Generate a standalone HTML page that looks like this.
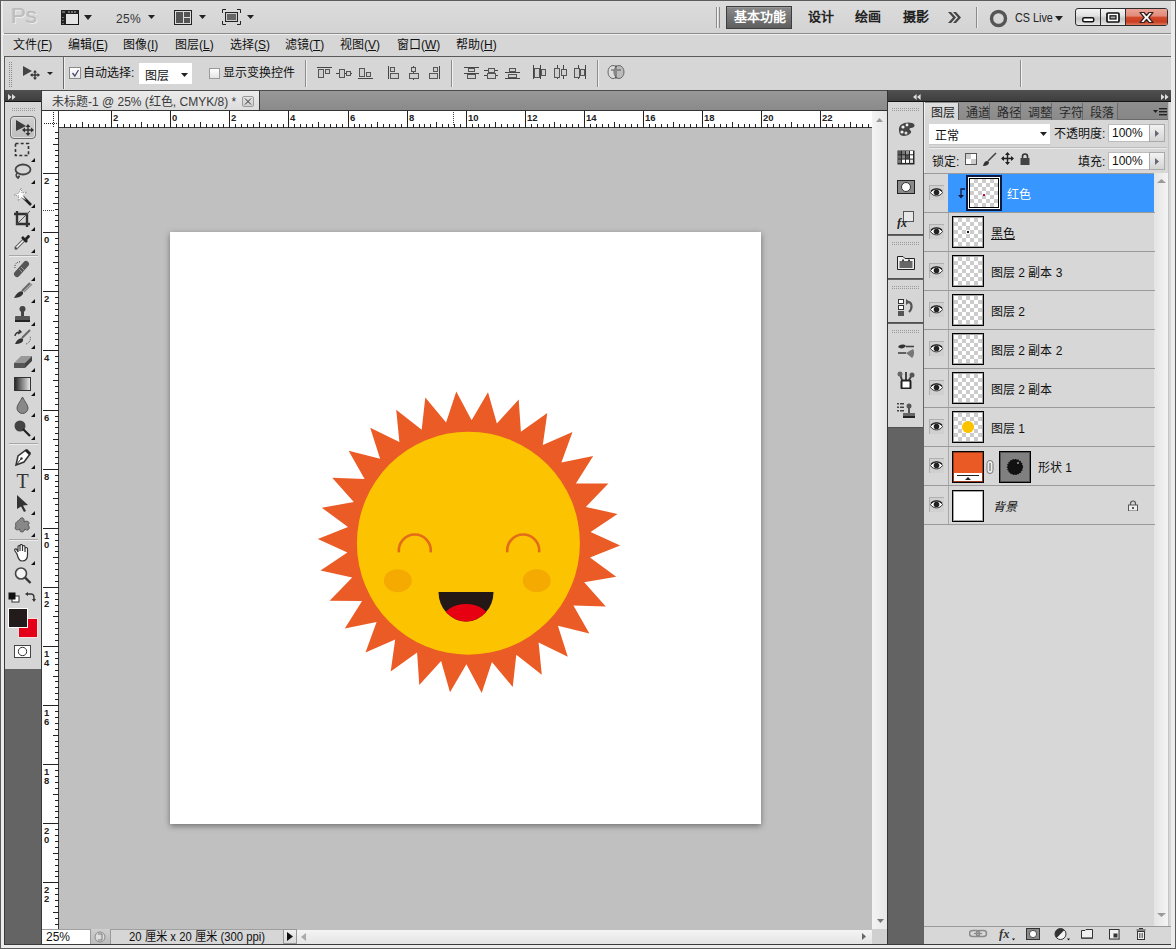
<!DOCTYPE html>
<html lang="zh-CN"><head><meta charset="utf-8"><style>
*{margin:0;padding:0;box-sizing:border-box}
html,body{width:1176px;height:949px;overflow:hidden;background:#d6d6d6;font-family:"Liberation Sans",sans-serif;font-size:12px;color:#000}
div{position:absolute}
.t{white-space:nowrap;line-height:14px}
</style></head>
<body>
<div style="left:0px;top:0px;width:1176px;height:949px;background:#ececec;border:1px solid #5c5c5c"></div>
<div style="left:3px;top:1px;width:1168px;height:32px;background:linear-gradient(#dcdcdc,#d3d3d3)"></div>
<div style="left:4px;top:33px;width:1167px;height:1px;background:#8c8c8c"></div>
<div style="left:3px;top:34px;width:1168px;height:22px;background:#d6d6d6;border-top:1px solid #f0f0f0"></div>
<div style="left:4px;top:56px;width:1167px;height:1px;background:#5a5a5a"></div>
<div style="left:4px;top:57px;width:1167px;height:33px;background:#d6d6d6;border-left:1px solid #5a5a5a"></div>
<div style="left:42px;top:90px;width:845px;height:20px;background:linear-gradient(#999,#8a8a8a)"></div>
<div style="left:42px;top:110px;width:830px;height:18px;background:#fff;border-top:1px solid #3a3a3a;border-bottom:1px solid #3a3a3a"></div>
<div style="left:42px;top:111px;width:17px;height:818px;background:#fff;border-right:1px solid #3a3a3a"></div>
<div style="left:59px;top:128px;width:813px;height:801px;background:#c0c0c0"></div>
<div style="left:170px;top:232px;width:591px;height:592px;background:#fff;box-shadow:0 2px 6px rgba(0,0,0,.42)"></div>
<div style="left:872px;top:110px;width:15px;height:819px;background:linear-gradient(90deg,#f4f4f4,#e6e6e6)"></div>
<div style="left:42px;top:929px;width:830px;height:15px;background:#d6d6d6;border-top:1px solid #a0a0a0"></div>
<div style="left:887px;top:90px;width:1px;height:855px;background:#333"></div>
<div style="left:4px;top:90px;width:38px;height:855px;background:#646464;border-left:1px solid #3a3a3a;border-right:1px solid #3a3a3a"></div>
<div style="left:5px;top:90px;width:36px;height:12px;background:linear-gradient(#505050,#3e3e3e);border-bottom:1px solid #141414"></div>
<div style="left:5px;top:102px;width:36px;height:567px;background:#d6d6d6"></div>
<div style="left:888px;top:90px;width:36px;height:855px;background:#636363"></div>
<div style="left:888px;top:90px;width:283px;height:12px;background:linear-gradient(#505050,#3e3e3e);border-bottom:1px solid #141414"></div>
<div style="left:42px;top:110px;width:845px;height:1px;background:#333"></div>
<div style="left:888px;top:102px;width:35px;height:133px;background:#d6d6d6;border-bottom:1px solid #505050"></div>
<div style="left:888px;top:236px;width:35px;height:43px;background:#d6d6d6;border-bottom:1px solid #505050"></div>
<div style="left:888px;top:280px;width:35px;height:43px;background:#d6d6d6;border-bottom:1px solid #505050"></div>
<div style="left:888px;top:324px;width:35px;height:104px;background:#d6d6d6;border-bottom:1px solid #505050"></div>
<div style="left:924px;top:102px;width:247px;height:843px;background:#d7d7d7;border-left:1px solid #f0f0f0"></div>
<div style="left:925px;top:102px;width:246px;height:18px;background:#8a8a8a"></div>
<svg style="position:absolute;left:59px;top:111px;" width="813" height="17" viewBox="0 0 813 17"><rect x="5" y="13" width="1" height="4" fill="#222"/><rect x="11" y="13" width="1" height="4" fill="#222"/><rect x="17" y="13" width="1" height="4" fill="#222"/><rect x="23" y="11" width="1" height="6" fill="#222"/><rect x="29" y="13" width="1" height="4" fill="#222"/><rect x="34" y="13" width="1" height="4" fill="#222"/><rect x="40" y="13" width="1" height="4" fill="#222"/><rect x="46" y="13" width="1" height="4" fill="#222"/><rect x="52" y="0" width="1" height="17" fill="#222"/><text x="54" y="10" font-size="9.5" font-weight="bold" fill="#222" font-family="Liberation Sans">2</text><rect x="58" y="13" width="1" height="4" fill="#222"/><rect x="64" y="13" width="1" height="4" fill="#222"/><rect x="70" y="13" width="1" height="4" fill="#222"/><rect x="76" y="13" width="1" height="4" fill="#222"/><rect x="82" y="11" width="1" height="6" fill="#222"/><rect x="88" y="13" width="1" height="4" fill="#222"/><rect x="94" y="13" width="1" height="4" fill="#222"/><rect x="99" y="13" width="1" height="4" fill="#222"/><rect x="105" y="13" width="1" height="4" fill="#222"/><rect x="111" y="0" width="1" height="17" fill="#222"/><text x="113" y="10" font-size="9.5" font-weight="bold" fill="#222" font-family="Liberation Sans">0</text><rect x="117" y="13" width="1" height="4" fill="#222"/><rect x="123" y="13" width="1" height="4" fill="#222"/><rect x="129" y="13" width="1" height="4" fill="#222"/><rect x="135" y="13" width="1" height="4" fill="#222"/><rect x="141" y="11" width="1" height="6" fill="#222"/><rect x="147" y="13" width="1" height="4" fill="#222"/><rect x="153" y="13" width="1" height="4" fill="#222"/><rect x="159" y="13" width="1" height="4" fill="#222"/><rect x="164" y="13" width="1" height="4" fill="#222"/><rect x="170" y="0" width="1" height="17" fill="#222"/><text x="172" y="10" font-size="9.5" font-weight="bold" fill="#222" font-family="Liberation Sans">2</text><rect x="176" y="13" width="1" height="4" fill="#222"/><rect x="182" y="13" width="1" height="4" fill="#222"/><rect x="188" y="13" width="1" height="4" fill="#222"/><rect x="194" y="13" width="1" height="4" fill="#222"/><rect x="200" y="11" width="1" height="6" fill="#222"/><rect x="206" y="13" width="1" height="4" fill="#222"/><rect x="212" y="13" width="1" height="4" fill="#222"/><rect x="218" y="13" width="1" height="4" fill="#222"/><rect x="224" y="13" width="1" height="4" fill="#222"/><rect x="229" y="0" width="1" height="17" fill="#222"/><text x="231" y="10" font-size="9.5" font-weight="bold" fill="#222" font-family="Liberation Sans">4</text><rect x="235" y="13" width="1" height="4" fill="#222"/><rect x="241" y="13" width="1" height="4" fill="#222"/><rect x="247" y="13" width="1" height="4" fill="#222"/><rect x="253" y="13" width="1" height="4" fill="#222"/><rect x="259" y="11" width="1" height="6" fill="#222"/><rect x="265" y="13" width="1" height="4" fill="#222"/><rect x="271" y="13" width="1" height="4" fill="#222"/><rect x="277" y="13" width="1" height="4" fill="#222"/><rect x="283" y="13" width="1" height="4" fill="#222"/><rect x="289" y="0" width="1" height="17" fill="#222"/><text x="291" y="10" font-size="9.5" font-weight="bold" fill="#222" font-family="Liberation Sans">6</text><rect x="295" y="13" width="1" height="4" fill="#222"/><rect x="300" y="13" width="1" height="4" fill="#222"/><rect x="306" y="13" width="1" height="4" fill="#222"/><rect x="312" y="13" width="1" height="4" fill="#222"/><rect x="318" y="11" width="1" height="6" fill="#222"/><rect x="324" y="13" width="1" height="4" fill="#222"/><rect x="330" y="13" width="1" height="4" fill="#222"/><rect x="336" y="13" width="1" height="4" fill="#222"/><rect x="342" y="13" width="1" height="4" fill="#222"/><rect x="348" y="0" width="1" height="17" fill="#222"/><text x="350" y="10" font-size="9.5" font-weight="bold" fill="#222" font-family="Liberation Sans">8</text><rect x="354" y="13" width="1" height="4" fill="#222"/><rect x="360" y="13" width="1" height="4" fill="#222"/><rect x="365" y="13" width="1" height="4" fill="#222"/><rect x="371" y="13" width="1" height="4" fill="#222"/><rect x="377" y="11" width="1" height="6" fill="#222"/><rect x="383" y="13" width="1" height="4" fill="#222"/><rect x="389" y="13" width="1" height="4" fill="#222"/><rect x="395" y="13" width="1" height="4" fill="#222"/><rect x="401" y="13" width="1" height="4" fill="#222"/><rect x="407" y="0" width="1" height="17" fill="#222"/><text x="409" y="10" font-size="9.5" font-weight="bold" fill="#222" font-family="Liberation Sans">10</text><rect x="413" y="13" width="1" height="4" fill="#222"/><rect x="419" y="13" width="1" height="4" fill="#222"/><rect x="425" y="13" width="1" height="4" fill="#222"/><rect x="430" y="13" width="1" height="4" fill="#222"/><rect x="436" y="11" width="1" height="6" fill="#222"/><rect x="442" y="13" width="1" height="4" fill="#222"/><rect x="448" y="13" width="1" height="4" fill="#222"/><rect x="454" y="13" width="1" height="4" fill="#222"/><rect x="460" y="13" width="1" height="4" fill="#222"/><rect x="466" y="0" width="1" height="17" fill="#222"/><text x="468" y="10" font-size="9.5" font-weight="bold" fill="#222" font-family="Liberation Sans">12</text><rect x="472" y="13" width="1" height="4" fill="#222"/><rect x="478" y="13" width="1" height="4" fill="#222"/><rect x="484" y="13" width="1" height="4" fill="#222"/><rect x="490" y="13" width="1" height="4" fill="#222"/><rect x="495" y="11" width="1" height="6" fill="#222"/><rect x="501" y="13" width="1" height="4" fill="#222"/><rect x="507" y="13" width="1" height="4" fill="#222"/><rect x="513" y="13" width="1" height="4" fill="#222"/><rect x="519" y="13" width="1" height="4" fill="#222"/><rect x="525" y="0" width="1" height="17" fill="#222"/><text x="527" y="10" font-size="9.5" font-weight="bold" fill="#222" font-family="Liberation Sans">14</text><rect x="531" y="13" width="1" height="4" fill="#222"/><rect x="537" y="13" width="1" height="4" fill="#222"/><rect x="543" y="13" width="1" height="4" fill="#222"/><rect x="549" y="13" width="1" height="4" fill="#222"/><rect x="555" y="11" width="1" height="6" fill="#222"/><rect x="560" y="13" width="1" height="4" fill="#222"/><rect x="566" y="13" width="1" height="4" fill="#222"/><rect x="572" y="13" width="1" height="4" fill="#222"/><rect x="578" y="13" width="1" height="4" fill="#222"/><rect x="584" y="0" width="1" height="17" fill="#222"/><text x="586" y="10" font-size="9.5" font-weight="bold" fill="#222" font-family="Liberation Sans">16</text><rect x="590" y="13" width="1" height="4" fill="#222"/><rect x="596" y="13" width="1" height="4" fill="#222"/><rect x="602" y="13" width="1" height="4" fill="#222"/><rect x="608" y="13" width="1" height="4" fill="#222"/><rect x="614" y="11" width="1" height="6" fill="#222"/><rect x="620" y="13" width="1" height="4" fill="#222"/><rect x="625" y="13" width="1" height="4" fill="#222"/><rect x="631" y="13" width="1" height="4" fill="#222"/><rect x="637" y="13" width="1" height="4" fill="#222"/><rect x="643" y="0" width="1" height="17" fill="#222"/><text x="645" y="10" font-size="9.5" font-weight="bold" fill="#222" font-family="Liberation Sans">18</text><rect x="649" y="13" width="1" height="4" fill="#222"/><rect x="655" y="13" width="1" height="4" fill="#222"/><rect x="661" y="13" width="1" height="4" fill="#222"/><rect x="667" y="13" width="1" height="4" fill="#222"/><rect x="673" y="11" width="1" height="6" fill="#222"/><rect x="679" y="13" width="1" height="4" fill="#222"/><rect x="685" y="13" width="1" height="4" fill="#222"/><rect x="690" y="13" width="1" height="4" fill="#222"/><rect x="696" y="13" width="1" height="4" fill="#222"/><rect x="702" y="0" width="1" height="17" fill="#222"/><text x="704" y="10" font-size="9.5" font-weight="bold" fill="#222" font-family="Liberation Sans">20</text><rect x="708" y="13" width="1" height="4" fill="#222"/><rect x="714" y="13" width="1" height="4" fill="#222"/><rect x="720" y="13" width="1" height="4" fill="#222"/><rect x="726" y="13" width="1" height="4" fill="#222"/><rect x="732" y="11" width="1" height="6" fill="#222"/><rect x="738" y="13" width="1" height="4" fill="#222"/><rect x="744" y="13" width="1" height="4" fill="#222"/><rect x="750" y="13" width="1" height="4" fill="#222"/><rect x="755" y="13" width="1" height="4" fill="#222"/><rect x="761" y="0" width="1" height="17" fill="#222"/><text x="763" y="10" font-size="9.5" font-weight="bold" fill="#222" font-family="Liberation Sans">22</text><rect x="767" y="13" width="1" height="4" fill="#222"/><rect x="773" y="13" width="1" height="4" fill="#222"/><rect x="779" y="13" width="1" height="4" fill="#222"/><rect x="785" y="13" width="1" height="4" fill="#222"/><rect x="791" y="11" width="1" height="6" fill="#222"/><rect x="797" y="13" width="1" height="4" fill="#222"/><rect x="803" y="13" width="1" height="4" fill="#222"/><rect x="809" y="13" width="1" height="4" fill="#222"/></svg>
<svg style="position:absolute;left:43px;top:128px;" width="16" height="801" viewBox="0 0 16 801"><rect x="12" y="4" width="4" height="1" fill="#222"/><rect x="12" y="10" width="4" height="1" fill="#222"/><rect x="10" y="16" width="6" height="1" fill="#222"/><rect x="12" y="22" width="4" height="1" fill="#222"/><rect x="12" y="27" width="4" height="1" fill="#222"/><rect x="12" y="33" width="4" height="1" fill="#222"/><rect x="12" y="39" width="4" height="1" fill="#222"/><rect x="0" y="45" width="16" height="1" fill="#222"/><text x="1" y="56" font-size="9.5" font-weight="bold" fill="#222" font-family="Liberation Sans">2</text><rect x="12" y="51" width="4" height="1" fill="#222"/><rect x="12" y="57" width="4" height="1" fill="#222"/><rect x="12" y="63" width="4" height="1" fill="#222"/><rect x="12" y="69" width="4" height="1" fill="#222"/><rect x="10" y="75" width="6" height="1" fill="#222"/><rect x="12" y="81" width="4" height="1" fill="#222"/><rect x="12" y="87" width="4" height="1" fill="#222"/><rect x="12" y="92" width="4" height="1" fill="#222"/><rect x="12" y="98" width="4" height="1" fill="#222"/><rect x="0" y="104" width="16" height="1" fill="#222"/><text x="1" y="115" font-size="9.5" font-weight="bold" fill="#222" font-family="Liberation Sans">0</text><rect x="12" y="110" width="4" height="1" fill="#222"/><rect x="12" y="116" width="4" height="1" fill="#222"/><rect x="12" y="122" width="4" height="1" fill="#222"/><rect x="12" y="128" width="4" height="1" fill="#222"/><rect x="10" y="134" width="6" height="1" fill="#222"/><rect x="12" y="140" width="4" height="1" fill="#222"/><rect x="12" y="146" width="4" height="1" fill="#222"/><rect x="12" y="152" width="4" height="1" fill="#222"/><rect x="12" y="157" width="4" height="1" fill="#222"/><rect x="0" y="163" width="16" height="1" fill="#222"/><text x="1" y="174" font-size="9.5" font-weight="bold" fill="#222" font-family="Liberation Sans">2</text><rect x="12" y="169" width="4" height="1" fill="#222"/><rect x="12" y="175" width="4" height="1" fill="#222"/><rect x="12" y="181" width="4" height="1" fill="#222"/><rect x="12" y="187" width="4" height="1" fill="#222"/><rect x="10" y="193" width="6" height="1" fill="#222"/><rect x="12" y="199" width="4" height="1" fill="#222"/><rect x="12" y="205" width="4" height="1" fill="#222"/><rect x="12" y="211" width="4" height="1" fill="#222"/><rect x="12" y="217" width="4" height="1" fill="#222"/><rect x="0" y="222" width="16" height="1" fill="#222"/><text x="1" y="233" font-size="9.5" font-weight="bold" fill="#222" font-family="Liberation Sans">4</text><rect x="12" y="228" width="4" height="1" fill="#222"/><rect x="12" y="234" width="4" height="1" fill="#222"/><rect x="12" y="240" width="4" height="1" fill="#222"/><rect x="12" y="246" width="4" height="1" fill="#222"/><rect x="10" y="252" width="6" height="1" fill="#222"/><rect x="12" y="258" width="4" height="1" fill="#222"/><rect x="12" y="264" width="4" height="1" fill="#222"/><rect x="12" y="270" width="4" height="1" fill="#222"/><rect x="12" y="276" width="4" height="1" fill="#222"/><rect x="0" y="282" width="16" height="1" fill="#222"/><text x="1" y="293" font-size="9.5" font-weight="bold" fill="#222" font-family="Liberation Sans">6</text><rect x="12" y="288" width="4" height="1" fill="#222"/><rect x="12" y="293" width="4" height="1" fill="#222"/><rect x="12" y="299" width="4" height="1" fill="#222"/><rect x="12" y="305" width="4" height="1" fill="#222"/><rect x="10" y="311" width="6" height="1" fill="#222"/><rect x="12" y="317" width="4" height="1" fill="#222"/><rect x="12" y="323" width="4" height="1" fill="#222"/><rect x="12" y="329" width="4" height="1" fill="#222"/><rect x="12" y="335" width="4" height="1" fill="#222"/><rect x="0" y="341" width="16" height="1" fill="#222"/><text x="1" y="352" font-size="9.5" font-weight="bold" fill="#222" font-family="Liberation Sans">8</text><rect x="12" y="347" width="4" height="1" fill="#222"/><rect x="12" y="353" width="4" height="1" fill="#222"/><rect x="12" y="358" width="4" height="1" fill="#222"/><rect x="12" y="364" width="4" height="1" fill="#222"/><rect x="10" y="370" width="6" height="1" fill="#222"/><rect x="12" y="376" width="4" height="1" fill="#222"/><rect x="12" y="382" width="4" height="1" fill="#222"/><rect x="12" y="388" width="4" height="1" fill="#222"/><rect x="12" y="394" width="4" height="1" fill="#222"/><rect x="0" y="400" width="16" height="1" fill="#222"/><text x="1" y="411" font-size="9.5" font-weight="bold" fill="#222" font-family="Liberation Sans">1</text><text x="1" y="420" font-size="9.5" font-weight="bold" fill="#222" font-family="Liberation Sans">0</text><rect x="12" y="406" width="4" height="1" fill="#222"/><rect x="12" y="412" width="4" height="1" fill="#222"/><rect x="12" y="418" width="4" height="1" fill="#222"/><rect x="12" y="423" width="4" height="1" fill="#222"/><rect x="10" y="429" width="6" height="1" fill="#222"/><rect x="12" y="435" width="4" height="1" fill="#222"/><rect x="12" y="441" width="4" height="1" fill="#222"/><rect x="12" y="447" width="4" height="1" fill="#222"/><rect x="12" y="453" width="4" height="1" fill="#222"/><rect x="0" y="459" width="16" height="1" fill="#222"/><text x="1" y="470" font-size="9.5" font-weight="bold" fill="#222" font-family="Liberation Sans">1</text><text x="1" y="479" font-size="9.5" font-weight="bold" fill="#222" font-family="Liberation Sans">2</text><rect x="12" y="465" width="4" height="1" fill="#222"/><rect x="12" y="471" width="4" height="1" fill="#222"/><rect x="12" y="477" width="4" height="1" fill="#222"/><rect x="12" y="483" width="4" height="1" fill="#222"/><rect x="10" y="488" width="6" height="1" fill="#222"/><rect x="12" y="494" width="4" height="1" fill="#222"/><rect x="12" y="500" width="4" height="1" fill="#222"/><rect x="12" y="506" width="4" height="1" fill="#222"/><rect x="12" y="512" width="4" height="1" fill="#222"/><rect x="0" y="518" width="16" height="1" fill="#222"/><text x="1" y="529" font-size="9.5" font-weight="bold" fill="#222" font-family="Liberation Sans">1</text><text x="1" y="538" font-size="9.5" font-weight="bold" fill="#222" font-family="Liberation Sans">4</text><rect x="12" y="524" width="4" height="1" fill="#222"/><rect x="12" y="530" width="4" height="1" fill="#222"/><rect x="12" y="536" width="4" height="1" fill="#222"/><rect x="12" y="542" width="4" height="1" fill="#222"/><rect x="10" y="548" width="6" height="1" fill="#222"/><rect x="12" y="553" width="4" height="1" fill="#222"/><rect x="12" y="559" width="4" height="1" fill="#222"/><rect x="12" y="565" width="4" height="1" fill="#222"/><rect x="12" y="571" width="4" height="1" fill="#222"/><rect x="0" y="577" width="16" height="1" fill="#222"/><text x="1" y="588" font-size="9.5" font-weight="bold" fill="#222" font-family="Liberation Sans">1</text><text x="1" y="597" font-size="9.5" font-weight="bold" fill="#222" font-family="Liberation Sans">6</text><rect x="12" y="583" width="4" height="1" fill="#222"/><rect x="12" y="589" width="4" height="1" fill="#222"/><rect x="12" y="595" width="4" height="1" fill="#222"/><rect x="12" y="601" width="4" height="1" fill="#222"/><rect x="10" y="607" width="6" height="1" fill="#222"/><rect x="12" y="613" width="4" height="1" fill="#222"/><rect x="12" y="618" width="4" height="1" fill="#222"/><rect x="12" y="624" width="4" height="1" fill="#222"/><rect x="12" y="630" width="4" height="1" fill="#222"/><rect x="0" y="636" width="16" height="1" fill="#222"/><text x="1" y="647" font-size="9.5" font-weight="bold" fill="#222" font-family="Liberation Sans">1</text><text x="1" y="656" font-size="9.5" font-weight="bold" fill="#222" font-family="Liberation Sans">8</text><rect x="12" y="642" width="4" height="1" fill="#222"/><rect x="12" y="648" width="4" height="1" fill="#222"/><rect x="12" y="654" width="4" height="1" fill="#222"/><rect x="12" y="660" width="4" height="1" fill="#222"/><rect x="10" y="666" width="6" height="1" fill="#222"/><rect x="12" y="672" width="4" height="1" fill="#222"/><rect x="12" y="678" width="4" height="1" fill="#222"/><rect x="12" y="683" width="4" height="1" fill="#222"/><rect x="12" y="689" width="4" height="1" fill="#222"/><rect x="0" y="695" width="16" height="1" fill="#222"/><text x="1" y="706" font-size="9.5" font-weight="bold" fill="#222" font-family="Liberation Sans">2</text><text x="1" y="715" font-size="9.5" font-weight="bold" fill="#222" font-family="Liberation Sans">0</text><rect x="12" y="701" width="4" height="1" fill="#222"/><rect x="12" y="707" width="4" height="1" fill="#222"/><rect x="12" y="713" width="4" height="1" fill="#222"/><rect x="12" y="719" width="4" height="1" fill="#222"/><rect x="10" y="725" width="6" height="1" fill="#222"/><rect x="12" y="731" width="4" height="1" fill="#222"/><rect x="12" y="737" width="4" height="1" fill="#222"/><rect x="12" y="743" width="4" height="1" fill="#222"/><rect x="12" y="748" width="4" height="1" fill="#222"/><rect x="0" y="754" width="16" height="1" fill="#222"/><text x="1" y="765" font-size="9.5" font-weight="bold" fill="#222" font-family="Liberation Sans">2</text><text x="1" y="774" font-size="9.5" font-weight="bold" fill="#222" font-family="Liberation Sans">2</text><rect x="12" y="760" width="4" height="1" fill="#222"/><rect x="12" y="766" width="4" height="1" fill="#222"/><rect x="12" y="772" width="4" height="1" fill="#222"/><rect x="12" y="778" width="4" height="1" fill="#222"/><rect x="10" y="784" width="6" height="1" fill="#222"/><rect x="12" y="790" width="4" height="1" fill="#222"/><rect x="12" y="796" width="4" height="1" fill="#222"/></svg>
<svg style="position:absolute;left:170px;top:232px;" width="591" height="592" viewBox="0 0 591 592"><path d="M447.5,281.9 L415.8,274.9 L438.4,251.6 L405.9,251.4 L423.2,223.9 L391.4,230.5 L402.5,200.0 L372.8,213.0 L377.3,180.9 L350.9,199.8 L348.7,167.4 L326.9,191.4 L318.0,160.2 L301.6,188.2 L286.3,159.5 L276.1,190.4 L255.3,165.5 L251.7,197.7 L226.2,177.7 L229.4,210.0 L200.2,195.7 L210.1,226.7 L178.6,218.8 L194.6,247.0 L162.2,245.8 L183.8,270.1 L151.8,275.7 L178.0,294.9 L147.8,307.0 L177.4,320.4 L150.5,338.5 L182.2,345.5 L159.6,368.8 L192.1,369.0 L174.8,396.5 L206.6,389.9 L195.5,420.4 L225.2,407.4 L220.7,439.5 L247.1,420.6 L249.3,453.0 L271.1,429.0 L280.0,460.2 L296.4,432.2 L311.7,460.9 L321.9,430.0 L342.7,454.9 L346.3,422.7 L371.8,442.7 L368.6,410.4 L397.8,424.7 L387.9,393.7 L419.4,401.6 L403.4,373.4 L435.8,374.6 L414.2,350.3 L446.2,344.7 L420.0,325.5 L450.2,313.4 L420.6,300.0Z" fill="#ea5b25"/><circle cx="298.4" cy="311.20000000000005" r="111.5" fill="#fcc400"/><path d="M228.9,320.29999999999995 A16,16 0 1 1 260.7,320.29999999999995" fill="none" stroke="#e36c1a" stroke-width="2.6"/><path d="M337.30000000000007,320.29999999999995 A16,16 0 1 1 369.1,320.29999999999995" fill="none" stroke="#e36c1a" stroke-width="2.6"/><ellipse cx="227.8" cy="348.70000000000005" rx="14" ry="11.5" fill="#f4aa00"/><ellipse cx="366.70000000000005" cy="348.70000000000005" rx="14" ry="11.5" fill="#f4aa00"/><path d="M268.5,360 L323.5,360 A27.5,29.5 0 0 1 268.5,360 Z" fill="#231815"/><clipPath id="mc"><path d="M268.5,360 L323.5,360 A27.5,29.5 0 0 1 268.5,360 Z"/></clipPath><ellipse clip-path="url(#mc)" cx="296" cy="389" rx="24" ry="17" fill="#e60012"/></svg>
<div class="t" style="left:11px;top:5px;font-size:22.5px;font-weight:normal;color:#bdbdbd;line-height:22px;letter-spacing:-0.3px;text-shadow:1px 1px 0 #ececec,-1px 0 0 #c8c8c8">Ps</div>
<svg style="position:absolute;left:61px;top:10px;" width="18" height="15" viewBox="0 0 18 15"><rect x="0.5" y="0.5" width="17" height="14" fill="#e4e4e4" stroke="#111"/><rect x="0" y="0" width="18" height="4" fill="#222"/><rect x="0" y="0" width="5" height="15" fill="#222"/><rect x="7" y="1.5" width="2" height="1" fill="#bbb"/><rect x="10" y="1.5" width="2" height="1" fill="#bbb"/><rect x="13" y="1.5" width="2" height="1" fill="#bbb"/><rect x="1.5" y="7" width="1" height="1" fill="#bbb"/><rect x="1.5" y="10" width="1" height="1" fill="#bbb"/><rect x="1.5" y="13" width="1" height="1" fill="#bbb"/><rect x="1" y="1" width="3" height="2" fill="#666"/></svg>
<svg style="position:absolute;left:84px;top:15px;" width="8" height="5" viewBox="0 0 8 5"><path d="M0,0 L8,0 L4.0,5 Z" fill="#222"/></svg>
<div class="t" style="left:116px;top:12px;font-size:12px;color:#333;letter-spacing:0.3px">25%</div>
<svg style="position:absolute;left:148px;top:15px;" width="7" height="4" viewBox="0 0 7 4"><path d="M0,0 L7,0 L3.5,4 Z" fill="#222"/></svg>
<svg style="position:absolute;left:174px;top:10px;" width="18" height="15" viewBox="0 0 18 15"><rect x="0.5" y="0.5" width="17" height="14" fill="#ddd" stroke="#222"/><rect x="2" y="2" width="7" height="11" fill="#555"/><rect x="10" y="2" width="6" height="5" fill="#555"/><rect x="10" y="8" width="6" height="5" fill="#555"/></svg>
<svg style="position:absolute;left:199px;top:15px;" width="7" height="4" viewBox="0 0 7 4"><path d="M0,0 L7,0 L3.5,4 Z" fill="#222"/></svg>
<svg style="position:absolute;left:222px;top:9px;" width="19" height="16" viewBox="0 0 19 16"><path d="M0.5,4 V0.5 H4 M15,0.5 H18.5 V4 M18.5,12 V15.5 H15 M4,15.5 H0.5 V12" fill="none" stroke="#222"/><rect x="3.5" y="3.5" width="12" height="9" fill="#ccc" stroke="#222"/><rect x="5" y="5" width="9" height="6" fill="#666"/></svg>
<svg style="position:absolute;left:247px;top:15px;" width="7" height="4" viewBox="0 0 7 4"><path d="M0,0 L7,0 L3.5,4 Z" fill="#222"/></svg>
<div style="left:716px;top:7px;width:1px;height:21px;background:#f4f4f4;border-left:1px solid #8a8a8a;width:2px"></div>
<div style="left:719px;top:7px;width:1px;height:21px;background:#8a8a8a"></div>
<div style="left:726px;top:6px;width:66px;height:23px;background:linear-gradient(#8a8a8a,#5e5e5e);border:1px solid #3c3c3c;box-shadow:inset 0 1px 0 #9a9a9a"></div>
<div class="t" style="left:734px;top:10px;font-size:13px;font-weight:bold;color:#fff;letter-spacing:0px">基本功能</div>
<div class="t" style="left:808px;top:10px;font-size:13px;font-weight:bold;color:#222">设计</div>
<div class="t" style="left:855px;top:10px;font-size:13px;font-weight:bold;color:#222">绘画</div>
<div class="t" style="left:903px;top:10px;font-size:13px;font-weight:bold;color:#222">摄影</div>
<svg style="position:absolute;left:947px;top:11px;" width="15" height="13" viewBox="0 0 15 13"><path d="M1,1 L6,6.5 L1,12 H4 L9,6.5 L4,1 Z M6,1 L11,6.5 L6,12 H9 L14,6.5 L9,1 Z" fill="#444"/></svg>
<div style="left:976px;top:7px;width:1px;height:21px;background:#8a8a8a"></div>
<div style="left:977px;top:7px;width:1px;height:21px;background:#eee"></div>
<svg style="position:absolute;left:989px;top:9px;" width="19" height="19" viewBox="0 0 19 19"><circle cx="9.5" cy="9.5" r="7" fill="none" stroke="#555" stroke-width="3.4"/></svg>
<div class="t" style="left:1015px;top:11px;font-size:12px;color:#222;transform:scaleX(0.9);transform-origin:0 0">CS Live</div>
<svg style="position:absolute;left:1055px;top:16px;" width="8" height="5" viewBox="0 0 8 5"><path d="M0,0 L8,0 L4.0,5 Z" fill="#222"/></svg>
<div style="left:1075px;top:8px;width:93px;height:18px;border:1px solid #2e2e2e;border-radius:3px;background:linear-gradient(#f4f4f4,#e2e2e2 40%,#c4c4c4 60%,#e6e6e6);overflow:hidden"></div>
<div style="left:1100px;top:9px;width:1px;height:16px;background:#2e2e2e"></div>
<div style="left:1125px;top:9px;width:1px;height:16px;background:#2e2e2e"></div>
<div style="left:1126px;top:9px;width:41px;height:16px;background:linear-gradient(#eba497,#e18a78 45%,#d44a2c 50%,#c93e22 80%,#e0785e);border-radius:0 2px 2px 0"></div>
<svg style="position:absolute;left:1082px;top:17px;" width="13" height="6" viewBox="0 0 13 6"><rect x="0.75" y="0.75" width="11" height="4" rx="1.5" fill="#fff" stroke="#111" stroke-width="1.5"/></svg>
<svg style="position:absolute;left:1106px;top:12px;" width="14" height="11" viewBox="0 0 14 11"><rect x="1" y="1" width="12" height="9" rx="1" fill="#fff" stroke="#111" stroke-width="1.7"/><rect x="4" y="3.8" width="6" height="3.2" fill="#aaa" stroke="#111" stroke-width="1.2"/></svg>
<svg style="position:absolute;left:1138px;top:11px;" width="17" height="13" viewBox="0 0 17 13"><path d="M2,1.5 H6 L8.5,4.5 L11,1.5 H15 L10.8,6.5 L15,11.5 H11 L8.5,8.5 L6,11.5 H2 L6.2,6.5 Z" fill="#fff" stroke="#3a2020" stroke-width="1.2" stroke-linejoin="round"/></svg>
<div class="t" style="left:13px;top:38px;font-size:12px;color:#111;line-height:14px">文件(<u>F</u>)</div>
<div class="t" style="left:68px;top:38px;font-size:12px;color:#111;line-height:14px">编辑(<u>E</u>)</div>
<div class="t" style="left:123px;top:38px;font-size:12px;color:#111;line-height:14px">图像(<u>I</u>)</div>
<div class="t" style="left:175px;top:38px;font-size:12px;color:#111;line-height:14px">图层(<u>L</u>)</div>
<div class="t" style="left:230px;top:38px;font-size:12px;color:#111;line-height:14px">选择(<u>S</u>)</div>
<div class="t" style="left:285px;top:38px;font-size:12px;color:#111;line-height:14px">滤镜(<u>T</u>)</div>
<div class="t" style="left:340px;top:38px;font-size:12px;color:#111;line-height:14px">视图(<u>V</u>)</div>
<div class="t" style="left:397px;top:38px;font-size:12px;color:#111;line-height:14px">窗口(<u>W</u>)</div>
<div class="t" style="left:456px;top:38px;font-size:12px;color:#111;line-height:14px">帮助(<u>H</u>)</div>
<svg style="position:absolute;left:9px;top:61px;" width="4" height="26" viewBox="0 0 4 26"><rect x="0" y="1" width="1" height="1" fill="#8a8a8a"/><rect x="0" y="3" width="1" height="1" fill="#8a8a8a"/><rect x="0" y="5" width="1" height="1" fill="#8a8a8a"/><rect x="0" y="7" width="1" height="1" fill="#8a8a8a"/><rect x="0" y="9" width="1" height="1" fill="#8a8a8a"/><rect x="0" y="11" width="1" height="1" fill="#8a8a8a"/><rect x="0" y="13" width="1" height="1" fill="#8a8a8a"/><rect x="0" y="15" width="1" height="1" fill="#8a8a8a"/><rect x="0" y="17" width="1" height="1" fill="#8a8a8a"/><rect x="0" y="19" width="1" height="1" fill="#8a8a8a"/><rect x="0" y="21" width="1" height="1" fill="#8a8a8a"/><rect x="0" y="23" width="1" height="1" fill="#8a8a8a"/><rect x="0" y="25" width="1" height="1" fill="#8a8a8a"/><rect x="2" y="1" width="1" height="1" fill="#8a8a8a"/><rect x="2" y="3" width="1" height="1" fill="#8a8a8a"/><rect x="2" y="5" width="1" height="1" fill="#8a8a8a"/><rect x="2" y="7" width="1" height="1" fill="#8a8a8a"/><rect x="2" y="9" width="1" height="1" fill="#8a8a8a"/><rect x="2" y="11" width="1" height="1" fill="#8a8a8a"/><rect x="2" y="13" width="1" height="1" fill="#8a8a8a"/><rect x="2" y="15" width="1" height="1" fill="#8a8a8a"/><rect x="2" y="17" width="1" height="1" fill="#8a8a8a"/><rect x="2" y="19" width="1" height="1" fill="#8a8a8a"/><rect x="2" y="21" width="1" height="1" fill="#8a8a8a"/><rect x="2" y="23" width="1" height="1" fill="#8a8a8a"/><rect x="2" y="25" width="1" height="1" fill="#8a8a8a"/></svg>
<svg style="position:absolute;left:22px;top:65px;" width="20" height="16" viewBox="0 0 20 16"><path d="M1,1 L10,6 L1,11 Z" fill="#444"/><path d="M13,6 V14 M9,10 H17" stroke="#333" stroke-width="1.3"/><path d="M13,5 L11,7.5 H15 Z M13,15 L11,12.5 H15 Z M8,10 L10.5,8 V12 Z M18,10 L15.5,8 V12 Z" fill="#333"/></svg>
<svg style="position:absolute;left:47px;top:72px;" width="6" height="3" viewBox="0 0 6 3"><path d="M0,0 L6,0 L3.0,3 Z" fill="#222"/></svg>
<div style="left:63px;top:57px;width:1px;height:32px;background:#6a6a6a"></div>
<div style="left:64px;top:57px;width:1px;height:32px;background:#f0f0f0"></div>
<div style="left:69px;top:67px;width:12px;height:12px;border:1px solid #8a8a8a;background:linear-gradient(#fff,#e8e8e8)"></div>
<svg style="position:absolute;left:71px;top:69px;" width="9" height="9" viewBox="0 0 9 9"><path d="M1.5,4 L3.8,7 L7.5,1" fill="none" stroke="#4a4a7a" stroke-width="1.3"/></svg>
<div class="t" style="left:83px;top:66px;font-size:12px;color:#111">自动选择:</div>
<div style="left:139px;top:63px;width:53px;height:21px;background:#fff"></div>
<div class="t" style="left:145px;top:69px;font-size:12px;color:#111">图层</div>
<svg style="position:absolute;left:181px;top:73px;" width="7" height="4" viewBox="0 0 7 4"><path d="M0,0 L7,0 L3.5,4 Z" fill="#222"/></svg>
<div style="left:209px;top:68px;width:11px;height:11px;border:1px solid #9a9a9a;background:linear-gradient(#fff,#e4e4e4)"></div>
<div class="t" style="left:223px;top:66px;font-size:12px;color:#111">显示变换控件</div>
<div style="left:1020px;top:60px;width:1px;height:27px;background:#8c8c8c"></div>
<div style="left:1021px;top:60px;width:1px;height:27px;background:#f0f0f0"></div>
<svg style="position:absolute;left:12px;top:108px;" width="24" height="3" viewBox="0 0 24 3"><rect x="0" y="0" width="1" height="1" fill="#9a9a9a"/><rect x="0" y="2" width="1" height="1" fill="#9a9a9a"/><rect x="2" y="0" width="1" height="1" fill="#9a9a9a"/><rect x="2" y="2" width="1" height="1" fill="#9a9a9a"/><rect x="4" y="0" width="1" height="1" fill="#9a9a9a"/><rect x="4" y="2" width="1" height="1" fill="#9a9a9a"/><rect x="6" y="0" width="1" height="1" fill="#9a9a9a"/><rect x="6" y="2" width="1" height="1" fill="#9a9a9a"/><rect x="8" y="0" width="1" height="1" fill="#9a9a9a"/><rect x="8" y="2" width="1" height="1" fill="#9a9a9a"/><rect x="10" y="0" width="1" height="1" fill="#9a9a9a"/><rect x="10" y="2" width="1" height="1" fill="#9a9a9a"/><rect x="12" y="0" width="1" height="1" fill="#9a9a9a"/><rect x="12" y="2" width="1" height="1" fill="#9a9a9a"/><rect x="14" y="0" width="1" height="1" fill="#9a9a9a"/><rect x="14" y="2" width="1" height="1" fill="#9a9a9a"/><rect x="16" y="0" width="1" height="1" fill="#9a9a9a"/><rect x="16" y="2" width="1" height="1" fill="#9a9a9a"/><rect x="18" y="0" width="1" height="1" fill="#9a9a9a"/><rect x="18" y="2" width="1" height="1" fill="#9a9a9a"/><rect x="20" y="0" width="1" height="1" fill="#9a9a9a"/><rect x="20" y="2" width="1" height="1" fill="#9a9a9a"/><rect x="22" y="0" width="1" height="1" fill="#9a9a9a"/><rect x="22" y="2" width="1" height="1" fill="#9a9a9a"/></svg>
<div style="left:10px;top:116px;width:26px;height:23px;border:1px solid #6a6a6a;border-radius:4px;background:linear-gradient(#d0d0d0,#bdbdbd);box-shadow:inset 0 0 0 1px #e2e2e2"></div>
<svg style="position:absolute;left:14px;top:119px;" width="20" height="17" viewBox="0 0 20 17"><path d="M2,1 L12,7 L2,12 Z" fill="#3c3c3c"/><path d="M14,6 V16 M9,11 H19" stroke="#333" stroke-width="1.4"/><path d="M14,5 L11.5,8 H16.5 Z M14,17 L11.5,14 H16.5 Z M8,11 L11,8.5 V13.5 Z M20,11 L17,8.5 V13.5 Z" fill="#333"/></svg>
<svg style="position:absolute;left:13px;top:141px;" width="20" height="19" viewBox="0 0 20 19"><rect x="2.5" y="2.5" width="13" height="12" fill="none" stroke="#333" stroke-width="1.6" stroke-dasharray="3,2.2"/></svg>
<svg style="position:absolute;left:31px;top:158px;" width="4" height="4" viewBox="0 0 4 4"><path d="M4,0 V4 H0 Z" fill="#111"/></svg>
<svg style="position:absolute;left:13px;top:163px;" width="20" height="19" viewBox="0 0 20 19"><ellipse cx="10" cy="6.5" rx="7.5" ry="5" fill="none" stroke="#444" stroke-width="1.8"/><path d="M4,10 C2,13 4,15 6,14 C7,13 5,12 5,16" fill="none" stroke="#444" stroke-width="1.5"/></svg>
<svg style="position:absolute;left:31px;top:180px;" width="4" height="4" viewBox="0 0 4 4"><path d="M4,0 V4 H0 Z" fill="#111"/></svg>
<svg style="position:absolute;left:13px;top:187px;" width="20" height="19" viewBox="0 0 20 19"><path d="M10,10 L18,18" stroke="#222" stroke-width="2.6"/><path d="M8,1 L9,6 L14,5 L10,8.5 L13,13 L8.5,10.5 L5,14 L6,9 L1,8 L6,6 Z" fill="#fff" stroke="#777" stroke-width="0.8" stroke-dasharray="1,1"/></svg>
<svg style="position:absolute;left:31px;top:204px;" width="4" height="4" viewBox="0 0 4 4"><path d="M4,0 V4 H0 Z" fill="#111"/></svg>
<svg style="position:absolute;left:13px;top:210px;" width="20" height="19" viewBox="0 0 20 19"><path d="M4,1 V14 H17 M1,4 H14 V17" fill="none" stroke="#333" stroke-width="2.4"/><path d="M4,14 L17,1" stroke="#555" stroke-width="1"/></svg>
<svg style="position:absolute;left:31px;top:227px;" width="4" height="4" viewBox="0 0 4 4"><path d="M4,0 V4 H0 Z" fill="#111"/></svg>
<svg style="position:absolute;left:13px;top:232px;" width="20" height="19" viewBox="0 0 20 19"><path d="M3,16 L11,8" stroke="#555" stroke-width="3.2" stroke-linecap="round"/><path d="M3.5,15.5 L10.5,8.5" stroke="#fff" stroke-width="1.4"/><path d="M9,5 L14,10" stroke="#222" stroke-width="2.6"/><path d="M12,6 L15,3 A1.6,1.6 0 0 1 16,6 L13,9 Z" fill="#222"/></svg>
<svg style="position:absolute;left:31px;top:249px;" width="4" height="4" viewBox="0 0 4 4"><path d="M4,0 V4 H0 Z" fill="#111"/></svg>
<svg style="position:absolute;left:13px;top:260px;" width="20" height="19" viewBox="0 0 20 19"><path d="M4,14 L13,4" stroke="#555" stroke-width="6" stroke-linecap="round"/><path d="M6,9 L9,12 M8,7 L11,10" stroke="#999" stroke-width="1"/><path d="M2,8 A5,5 0 0 1 8,2" fill="none" stroke="#333" stroke-width="1" stroke-dasharray="1,1"/></svg>
<svg style="position:absolute;left:31px;top:277px;" width="4" height="4" viewBox="0 0 4 4"><path d="M4,0 V4 H0 Z" fill="#111"/></svg>
<svg style="position:absolute;left:13px;top:282px;" width="20" height="19" viewBox="0 0 20 19"><path d="M9,9 L17,1" stroke="#666" stroke-width="2"/><path d="M11,10 L19,2" stroke="#888" stroke-width="1.2"/><path d="M1,16 C4,10 8,8 10,10 C11,13 6,16 1,16 Z" fill="#333"/></svg>
<svg style="position:absolute;left:31px;top:299px;" width="4" height="4" viewBox="0 0 4 4"><path d="M4,0 V4 H0 Z" fill="#111"/></svg>
<svg style="position:absolute;left:13px;top:305px;" width="20" height="19" viewBox="0 0 20 19"><circle cx="9.5" cy="4" r="3" fill="#444"/><rect x="8" y="6" width="3" height="5" fill="#444"/><rect x="2" y="11" width="15" height="5" rx="1" fill="#555"/><rect x="2" y="15" width="15" height="2" fill="#222"/></svg>
<svg style="position:absolute;left:31px;top:322px;" width="4" height="4" viewBox="0 0 4 4"><path d="M4,0 V4 H0 Z" fill="#111"/></svg>
<svg style="position:absolute;left:13px;top:328px;" width="20" height="19" viewBox="0 0 20 19"><path d="M9,10 L17,2" stroke="#666" stroke-width="2"/><path d="M2,16 C4,11 8,9 10,11 C11,14 7,16 2,16 Z" fill="#333"/><path d="M2,8 A5,4 0 0 1 8,4 M6,2 L8,4 L5,6" fill="none" stroke="#333" stroke-width="1.4"/><path d="M13,16 A6,6 0 0 0 17,8" fill="none" stroke="#444" stroke-width="1" stroke-dasharray="1,1"/></svg>
<svg style="position:absolute;left:31px;top:345px;" width="4" height="4" viewBox="0 0 4 4"><path d="M4,0 V4 H0 Z" fill="#111"/></svg>
<svg style="position:absolute;left:13px;top:351px;" width="20" height="19" viewBox="0 0 20 19"><path d="M1,12 L8,5 H19 L12,12 Z" fill="#999"/><path d="M1,12 H12 V17 H1 Z" fill="#555"/><path d="M12,12 L19,5 V10 L12,17 Z" fill="#444"/></svg>
<svg style="position:absolute;left:31px;top:368px;" width="4" height="4" viewBox="0 0 4 4"><path d="M4,0 V4 H0 Z" fill="#111"/></svg>
<svg style="position:absolute;left:13px;top:375px;" width="20" height="19" viewBox="0 0 20 19"><defs><linearGradient id="gg" x1="0" x2="1"><stop offset="0" stop-color="#222"/><stop offset="1" stop-color="#eee"/></linearGradient></defs><rect x="1.5" y="2.5" width="16" height="13" fill="url(#gg)" stroke="#333"/></svg>
<svg style="position:absolute;left:31px;top:392px;" width="4" height="4" viewBox="0 0 4 4"><path d="M4,0 V4 H0 Z" fill="#111"/></svg>
<svg style="position:absolute;left:13px;top:396px;" width="20" height="19" viewBox="0 0 20 19"><path d="M9.5,1 C12,6 15,9 15,12 A5.5,5.5 0 0 1 4,12 C4,9 7,6 9.5,1 Z" fill="#888" stroke="#555"/></svg>
<svg style="position:absolute;left:31px;top:413px;" width="4" height="4" viewBox="0 0 4 4"><path d="M4,0 V4 H0 Z" fill="#111"/></svg>
<svg style="position:absolute;left:13px;top:419px;" width="20" height="19" viewBox="0 0 20 19"><circle cx="7" cy="7" r="5.5" fill="#444"/><path d="M10,10 L17,17" stroke="#222" stroke-width="2.2"/></svg>
<svg style="position:absolute;left:31px;top:436px;" width="4" height="4" viewBox="0 0 4 4"><path d="M4,0 V4 H0 Z" fill="#111"/></svg>
<svg style="position:absolute;left:13px;top:448px;" width="20" height="19" viewBox="0 0 20 19"><path d="M3,17 L5,8 L13,2 L17,6 L11,14 Z" fill="#fff" stroke="#333" stroke-width="1.5"/><path d="M13,2 L17,6" stroke="#222" stroke-width="3"/><path d="M3,17 L8,11" stroke="#333"/><circle cx="8.5" cy="10.5" r="1.2" fill="#333"/></svg>
<svg style="position:absolute;left:31px;top:465px;" width="4" height="4" viewBox="0 0 4 4"><path d="M4,0 V4 H0 Z" fill="#111"/></svg>
<svg style="position:absolute;left:13px;top:471px;" width="20" height="19" viewBox="0 0 20 19"><text x="9.5" y="17" text-anchor="middle" font-family="Liberation Serif" font-size="20" fill="#333">T</text></svg>
<svg style="position:absolute;left:31px;top:488px;" width="4" height="4" viewBox="0 0 4 4"><path d="M4,0 V4 H0 Z" fill="#111"/></svg>
<svg style="position:absolute;left:13px;top:494px;" width="20" height="19" viewBox="0 0 20 19"><path d="M4,1 L15,11 L10,11.5 L13,17 L11,18 L8,12.5 L4,15 Z" fill="#333"/></svg>
<svg style="position:absolute;left:31px;top:511px;" width="4" height="4" viewBox="0 0 4 4"><path d="M4,0 V4 H0 Z" fill="#111"/></svg>
<svg style="position:absolute;left:13px;top:516px;" width="20" height="19" viewBox="0 0 20 19"><path d="M3,10 C1,6 6,5 7,3 C9,0 12,3 11,6 C14,4 18,6 15,9 C18,12 15,16 12,13 C11,17 6,17 7,13 C3,15 1,13 3,10 Z" fill="#888" stroke="#555"/></svg>
<svg style="position:absolute;left:31px;top:533px;" width="4" height="4" viewBox="0 0 4 4"><path d="M4,0 V4 H0 Z" fill="#111"/></svg>
<svg style="position:absolute;left:13px;top:544px;" width="20" height="19" viewBox="0 0 20 19"><path d="M4,10 L2,7 C1,5 3,4 4,6 L5,8 V3 C5,1 7,1 7,3 V7 V2 C7,0 9.5,0 9.5,2 V7 V3 C9.5,1 12,1 12,3 V8 V5 C12,3 14.5,3 14.5,5 V11 C14.5,15 12,17 9,17 C6,17 5,14 4,10 Z" fill="#fff" stroke="#333" stroke-width="1.2"/></svg>
<svg style="position:absolute;left:31px;top:561px;" width="4" height="4" viewBox="0 0 4 4"><path d="M4,0 V4 H0 Z" fill="#111"/></svg>
<svg style="position:absolute;left:13px;top:566px;" width="20" height="19" viewBox="0 0 20 19"><circle cx="8" cy="7.5" r="5.5" fill="#f4f4f4" stroke="#444" stroke-width="1.6"/><path d="M12,11.5 L17.5,17" stroke="#333" stroke-width="2.4"/></svg>
<div style="left:9px;top:255px;width:29px;height:1px;background:#a8a8a8"></div>
<div style="left:9px;top:256px;width:29px;height:1px;background:#ececec"></div>
<div style="left:9px;top:443px;width:29px;height:1px;background:#a8a8a8"></div>
<div style="left:9px;top:444px;width:29px;height:1px;background:#ececec"></div>
<div style="left:9px;top:539px;width:29px;height:1px;background:#a8a8a8"></div>
<div style="left:9px;top:540px;width:29px;height:1px;background:#ececec"></div>
<svg style="position:absolute;left:8px;top:592px;" width="12" height="11" viewBox="0 0 12 11"><rect x="4" y="4" width="7" height="6" fill="#fff" stroke="#333"/><rect x="0.5" y="0.5" width="7" height="7" fill="#111"/></svg>
<svg style="position:absolute;left:25px;top:592px;" width="11" height="12" viewBox="0 0 11 12"><path d="M2,2 H6 C9,2 9,4 9,7" fill="none" stroke="#333" stroke-width="1.4"/><path d="M0,2 L3,0 V4 Z M9,10 L7,7 H11 Z" fill="#333"/></svg>
<div style="left:18px;top:618px;width:20px;height:20px;background:#e5001a;border:1px solid #fbe0e0"></div>
<div style="left:8px;top:608px;width:20px;height:20px;background:#231b1b;border:1px solid #fff"></div>
<div style="left:14px;top:645px;width:17px;height:13px;background:#fff;border:1px solid #444"></div>
<svg style="position:absolute;left:17px;top:646px;" width="11" height="11" viewBox="0 0 11 11"><circle cx="5.5" cy="5.5" r="4.2" fill="#fff" stroke="#333"/></svg>
<div style="left:42px;top:90px;width:845px;height:1px;background:#4a4a4a"></div>
<div style="left:42px;top:91px;width:218px;height:19px;background:linear-gradient(#ececec,#dcdcdc);border-right:1px solid #3a3a3a"></div>
<div class="t" style="left:52px;top:95px;font-size:12px;color:#3a3a3a">未标题-1 @ 25% (红色, CMYK/8) *</div>
<div style="left:242px;top:96px;width:12px;height:11px;border:1px solid #9a9a9a;border-radius:2px;background:linear-gradient(#e4e4e4,#d0d0d0)"></div>
<svg style="position:absolute;left:244px;top:98px;" width="8" height="7" viewBox="0 0 8 7"><path d="M1,0.5 L7,6.5 M7,0.5 L1,6.5" stroke="#333" stroke-width="1"/></svg>
<svg style="position:absolute;left:43px;top:111px;" width="16" height="16" viewBox="0 0 16 16"><rect x="10" y="1" width="1" height="1" fill="#222"/><rect x="10" y="3" width="1" height="1" fill="#222"/><rect x="10" y="5" width="1" height="1" fill="#222"/><rect x="10" y="7" width="1" height="1" fill="#222"/><rect x="10" y="9" width="1" height="1" fill="#222"/><rect x="10" y="11" width="1" height="1" fill="#222"/><rect x="10" y="13" width="1" height="1" fill="#222"/><rect x="10" y="15" width="1" height="1" fill="#222"/><rect x="1" y="12" width="1" height="1" fill="#222"/><rect x="3" y="12" width="1" height="1" fill="#222"/><rect x="5" y="12" width="1" height="1" fill="#222"/><rect x="7" y="12" width="1" height="1" fill="#222"/><rect x="9" y="12" width="1" height="1" fill="#222"/><rect x="11" y="12" width="1" height="1" fill="#222"/><rect x="13" y="12" width="1" height="1" fill="#222"/><rect x="15" y="12" width="1" height="1" fill="#222"/></svg>
<svg style="position:absolute;left:876px;top:118px;" width="7" height="4" viewBox="0 0 7 4"><path d="M0,4 L3.5,0 L7,4 Z" fill="#999"/></svg>
<svg style="position:absolute;left:877px;top:919px;" width="7" height="4" viewBox="0 0 7 4"><path d="M0,0 L3.5,4 L7,0 Z" fill="#777"/></svg>
<div style="left:42px;top:929px;width:48px;height:15px;background:#fff;border-top:1px solid #a0a0a0"></div>
<div class="t" style="left:46px;top:930px;font-size:12px;color:#111">25%</div>
<div style="left:90px;top:929px;width:21px;height:15px;background:linear-gradient(#cfcfcf,#bcbcbc);border-left:1px solid #999;border-right:1px solid #999"></div>
<svg style="position:absolute;left:94px;top:931px;" width="12" height="12" viewBox="0 0 12 12"><circle cx="6" cy="6" r="5" fill="#ddd" stroke="#888"/><path d="M4,3 H8 V9 H4" fill="none" stroke="#777"/></svg>
<div style="left:111px;top:929px;width:172px;height:15px;background:#d6d6d6;border-top:1px solid #a0a0a0"></div>
<div class="t" style="left:129px;top:930px;font-size:12px;color:#111;transform:scaleX(0.94);transform-origin:0 0">20 厘米 x 20 厘米 (300 ppi)</div>
<div style="left:283px;top:929px;width:14px;height:15px;background:linear-gradient(#f0f0f0,#d8d8d8);border:1px solid #999"></div>
<svg style="position:absolute;left:287px;top:932px;" width="6" height="9" viewBox="0 0 6 9"><path d="M0,0 L6,4.5 L0,9 Z" fill="#111"/></svg>
<div style="left:297px;top:929px;width:575px;height:15px;background:linear-gradient(#f4f4f4,#e4e4e4);border-top:1px solid #c0c0c0"></div>
<svg style="position:absolute;left:301px;top:933px;" width="5" height="8" viewBox="0 0 5 8"><path d="M5,0 L0,4 L5,8 Z" fill="#aaa"/></svg>
<svg style="position:absolute;left:862px;top:933px;" width="4" height="7" viewBox="0 0 4 7"><path d="M0,0 L4,3.5 L0,7 Z" fill="#666"/></svg>
<div style="left:872px;top:929px;width:15px;height:15px;background:#d0d0d0"></div>
<svg style="position:absolute;left:1161px;top:94px;" width="8" height="6" viewBox="0 0 8 6"><path d="M0,0 L3.6,3 L0,6 Z M4,0 L7.6,3 L4,6 Z" fill="#ddd"/></svg>
<svg style="position:absolute;left:8px;top:94px;" width="8" height="6" viewBox="0 0 8 6"><path d="M0,0 L3.6,3 L0,6 Z M4,0 L7.6,3 L4,6 Z" fill="#ddd"/></svg>
<svg style="position:absolute;left:913px;top:94px;" width="8" height="6" viewBox="0 0 8 6"><path d="M3.6,0 L0,3 L3.6,6 Z M7.6,0 L4,3 L7.6,6 Z" fill="#ddd"/></svg>
<svg style="position:absolute;left:892px;top:108px;" width="27" height="3" viewBox="0 0 27 3"><rect x="0" y="0" width="1" height="1" fill="#9a9a9a"/><rect x="0" y="2" width="1" height="1" fill="#9a9a9a"/><rect x="2" y="0" width="1" height="1" fill="#9a9a9a"/><rect x="2" y="2" width="1" height="1" fill="#9a9a9a"/><rect x="4" y="0" width="1" height="1" fill="#9a9a9a"/><rect x="4" y="2" width="1" height="1" fill="#9a9a9a"/><rect x="6" y="0" width="1" height="1" fill="#9a9a9a"/><rect x="6" y="2" width="1" height="1" fill="#9a9a9a"/><rect x="8" y="0" width="1" height="1" fill="#9a9a9a"/><rect x="8" y="2" width="1" height="1" fill="#9a9a9a"/><rect x="10" y="0" width="1" height="1" fill="#9a9a9a"/><rect x="10" y="2" width="1" height="1" fill="#9a9a9a"/><rect x="12" y="0" width="1" height="1" fill="#9a9a9a"/><rect x="12" y="2" width="1" height="1" fill="#9a9a9a"/><rect x="14" y="0" width="1" height="1" fill="#9a9a9a"/><rect x="14" y="2" width="1" height="1" fill="#9a9a9a"/><rect x="16" y="0" width="1" height="1" fill="#9a9a9a"/><rect x="16" y="2" width="1" height="1" fill="#9a9a9a"/><rect x="18" y="0" width="1" height="1" fill="#9a9a9a"/><rect x="18" y="2" width="1" height="1" fill="#9a9a9a"/><rect x="20" y="0" width="1" height="1" fill="#9a9a9a"/><rect x="20" y="2" width="1" height="1" fill="#9a9a9a"/><rect x="22" y="0" width="1" height="1" fill="#9a9a9a"/><rect x="22" y="2" width="1" height="1" fill="#9a9a9a"/><rect x="24" y="0" width="1" height="1" fill="#9a9a9a"/><rect x="24" y="2" width="1" height="1" fill="#9a9a9a"/><rect x="26" y="0" width="1" height="1" fill="#9a9a9a"/><rect x="26" y="2" width="1" height="1" fill="#9a9a9a"/></svg>
<svg style="position:absolute;left:892px;top:242px;" width="27" height="3" viewBox="0 0 27 3"><rect x="0" y="0" width="1" height="1" fill="#9a9a9a"/><rect x="0" y="2" width="1" height="1" fill="#9a9a9a"/><rect x="2" y="0" width="1" height="1" fill="#9a9a9a"/><rect x="2" y="2" width="1" height="1" fill="#9a9a9a"/><rect x="4" y="0" width="1" height="1" fill="#9a9a9a"/><rect x="4" y="2" width="1" height="1" fill="#9a9a9a"/><rect x="6" y="0" width="1" height="1" fill="#9a9a9a"/><rect x="6" y="2" width="1" height="1" fill="#9a9a9a"/><rect x="8" y="0" width="1" height="1" fill="#9a9a9a"/><rect x="8" y="2" width="1" height="1" fill="#9a9a9a"/><rect x="10" y="0" width="1" height="1" fill="#9a9a9a"/><rect x="10" y="2" width="1" height="1" fill="#9a9a9a"/><rect x="12" y="0" width="1" height="1" fill="#9a9a9a"/><rect x="12" y="2" width="1" height="1" fill="#9a9a9a"/><rect x="14" y="0" width="1" height="1" fill="#9a9a9a"/><rect x="14" y="2" width="1" height="1" fill="#9a9a9a"/><rect x="16" y="0" width="1" height="1" fill="#9a9a9a"/><rect x="16" y="2" width="1" height="1" fill="#9a9a9a"/><rect x="18" y="0" width="1" height="1" fill="#9a9a9a"/><rect x="18" y="2" width="1" height="1" fill="#9a9a9a"/><rect x="20" y="0" width="1" height="1" fill="#9a9a9a"/><rect x="20" y="2" width="1" height="1" fill="#9a9a9a"/><rect x="22" y="0" width="1" height="1" fill="#9a9a9a"/><rect x="22" y="2" width="1" height="1" fill="#9a9a9a"/><rect x="24" y="0" width="1" height="1" fill="#9a9a9a"/><rect x="24" y="2" width="1" height="1" fill="#9a9a9a"/><rect x="26" y="0" width="1" height="1" fill="#9a9a9a"/><rect x="26" y="2" width="1" height="1" fill="#9a9a9a"/></svg>
<svg style="position:absolute;left:892px;top:286px;" width="27" height="3" viewBox="0 0 27 3"><rect x="0" y="0" width="1" height="1" fill="#9a9a9a"/><rect x="0" y="2" width="1" height="1" fill="#9a9a9a"/><rect x="2" y="0" width="1" height="1" fill="#9a9a9a"/><rect x="2" y="2" width="1" height="1" fill="#9a9a9a"/><rect x="4" y="0" width="1" height="1" fill="#9a9a9a"/><rect x="4" y="2" width="1" height="1" fill="#9a9a9a"/><rect x="6" y="0" width="1" height="1" fill="#9a9a9a"/><rect x="6" y="2" width="1" height="1" fill="#9a9a9a"/><rect x="8" y="0" width="1" height="1" fill="#9a9a9a"/><rect x="8" y="2" width="1" height="1" fill="#9a9a9a"/><rect x="10" y="0" width="1" height="1" fill="#9a9a9a"/><rect x="10" y="2" width="1" height="1" fill="#9a9a9a"/><rect x="12" y="0" width="1" height="1" fill="#9a9a9a"/><rect x="12" y="2" width="1" height="1" fill="#9a9a9a"/><rect x="14" y="0" width="1" height="1" fill="#9a9a9a"/><rect x="14" y="2" width="1" height="1" fill="#9a9a9a"/><rect x="16" y="0" width="1" height="1" fill="#9a9a9a"/><rect x="16" y="2" width="1" height="1" fill="#9a9a9a"/><rect x="18" y="0" width="1" height="1" fill="#9a9a9a"/><rect x="18" y="2" width="1" height="1" fill="#9a9a9a"/><rect x="20" y="0" width="1" height="1" fill="#9a9a9a"/><rect x="20" y="2" width="1" height="1" fill="#9a9a9a"/><rect x="22" y="0" width="1" height="1" fill="#9a9a9a"/><rect x="22" y="2" width="1" height="1" fill="#9a9a9a"/><rect x="24" y="0" width="1" height="1" fill="#9a9a9a"/><rect x="24" y="2" width="1" height="1" fill="#9a9a9a"/><rect x="26" y="0" width="1" height="1" fill="#9a9a9a"/><rect x="26" y="2" width="1" height="1" fill="#9a9a9a"/></svg>
<svg style="position:absolute;left:892px;top:330px;" width="27" height="3" viewBox="0 0 27 3"><rect x="0" y="0" width="1" height="1" fill="#9a9a9a"/><rect x="0" y="2" width="1" height="1" fill="#9a9a9a"/><rect x="2" y="0" width="1" height="1" fill="#9a9a9a"/><rect x="2" y="2" width="1" height="1" fill="#9a9a9a"/><rect x="4" y="0" width="1" height="1" fill="#9a9a9a"/><rect x="4" y="2" width="1" height="1" fill="#9a9a9a"/><rect x="6" y="0" width="1" height="1" fill="#9a9a9a"/><rect x="6" y="2" width="1" height="1" fill="#9a9a9a"/><rect x="8" y="0" width="1" height="1" fill="#9a9a9a"/><rect x="8" y="2" width="1" height="1" fill="#9a9a9a"/><rect x="10" y="0" width="1" height="1" fill="#9a9a9a"/><rect x="10" y="2" width="1" height="1" fill="#9a9a9a"/><rect x="12" y="0" width="1" height="1" fill="#9a9a9a"/><rect x="12" y="2" width="1" height="1" fill="#9a9a9a"/><rect x="14" y="0" width="1" height="1" fill="#9a9a9a"/><rect x="14" y="2" width="1" height="1" fill="#9a9a9a"/><rect x="16" y="0" width="1" height="1" fill="#9a9a9a"/><rect x="16" y="2" width="1" height="1" fill="#9a9a9a"/><rect x="18" y="0" width="1" height="1" fill="#9a9a9a"/><rect x="18" y="2" width="1" height="1" fill="#9a9a9a"/><rect x="20" y="0" width="1" height="1" fill="#9a9a9a"/><rect x="20" y="2" width="1" height="1" fill="#9a9a9a"/><rect x="22" y="0" width="1" height="1" fill="#9a9a9a"/><rect x="22" y="2" width="1" height="1" fill="#9a9a9a"/><rect x="24" y="0" width="1" height="1" fill="#9a9a9a"/><rect x="24" y="2" width="1" height="1" fill="#9a9a9a"/><rect x="26" y="0" width="1" height="1" fill="#9a9a9a"/><rect x="26" y="2" width="1" height="1" fill="#9a9a9a"/></svg>
<svg style="position:absolute;left:897px;top:121px;" width="19" height="18" viewBox="0 0 19 18"><path d="M2,9 C1,3 9,0 15,2 C19,3 18,7 14,7 C12,7 12,9 14,10 C15,12 11,15 7,15 C3,15 2,12 2,9 Z" fill="#444"/><circle cx="6" cy="6" r="1.6" fill="#eee"/><circle cx="10" cy="4" r="1.4" fill="#eee"/><circle cx="5" cy="11" r="1.6" fill="#eee"/><circle cx="9" cy="12" r="1.5" fill="#ddd"/></svg>
<svg style="position:absolute;left:897px;top:150px;" width="19" height="18" viewBox="0 0 19 18"><rect x="0.5" y="0.5" width="17" height="14" fill="#2a2a2a"/><rect x="1" y="1.0" width="3" height="3.3" fill="#555"/><rect x="5" y="1.0" width="3" height="3.3" fill="#777"/><rect x="9" y="1.0" width="3" height="3.3" fill="#999"/><rect x="13" y="1.0" width="3" height="3.3" fill="#fff"/><rect x="1" y="5.3" width="3" height="3.3" fill="#666"/><rect x="5" y="5.3" width="3" height="3.3" fill="#888"/><rect x="9" y="5.3" width="3" height="3.3" fill="#555"/><rect x="13" y="5.3" width="3" height="3.3" fill="#fff"/><rect x="1" y="9.6" width="3" height="3.3" fill="#777"/><rect x="5" y="9.6" width="3" height="3.3" fill="#fff"/><rect x="9" y="9.6" width="3" height="3.3" fill="#fff"/><rect x="13" y="9.6" width="3" height="3.3" fill="#ddd"/></svg>
<svg style="position:absolute;left:897px;top:180px;" width="19" height="18" viewBox="0 0 19 18"><rect x="0.5" y="0.5" width="17" height="13" fill="#8a8a8a" stroke="#222"/><circle cx="9" cy="7" r="4.5" fill="#fff" stroke="#333"/></svg>
<svg style="position:absolute;left:897px;top:211px;" width="19" height="18" viewBox="0 0 19 18"><rect x="6.5" y="0.5" width="10" height="10" fill="#e8e8e8" stroke="#555"/><text x="0" y="16" font-family="Liberation Serif" font-style="italic" font-weight="bold" font-size="12" fill="#222">fx</text></svg>
<svg style="position:absolute;left:897px;top:254px;" width="19" height="18" viewBox="0 0 19 18"><path d="M0.5,2.5 H6 L8,4.5 H17.5 V15.5 H0.5 Z" fill="#eee" stroke="#222"/><rect x="2.5" y="7" width="13" height="7" fill="#666"/><rect x="5" y="5.5" width="2" height="2" fill="#444"/><rect x="11" y="5.5" width="2" height="2" fill="#444"/></svg>
<svg style="position:absolute;left:897px;top:299px;" width="19" height="18" viewBox="0 0 19 18"><rect x="1.5" y="0.5" width="5" height="4" fill="#fff" stroke="#333"/><rect x="1.5" y="6.5" width="5" height="4" fill="#fff" stroke="#333"/><rect x="1" y="12" width="6" height="5" fill="#555"/><path d="M11,3 C15,3 16,9 12,13" fill="none" stroke="#555" stroke-width="2.2"/><path d="M9,0 L13,3 L9,6 Z" fill="#555"/></svg>
<svg style="position:absolute;left:897px;top:343px;" width="19" height="18" viewBox="0 0 19 18"><path d="M1,4 C3,1 7,1 9,3 C7,6 3,6 1,4 Z" fill="#333"/><path d="M9,3.5 H17" stroke="#444" stroke-width="1.6"/><path d="M1,10 H9" stroke="#444" stroke-width="1.6"/><path d="M9,10 L16,6 C18,9 17,13 15,15 Z" fill="#777"/></svg>
<svg style="position:absolute;left:897px;top:371px;" width="19" height="18" viewBox="0 0 19 18"><path d="M5,9 L3,3 M9,9 L9,1 M12,9 L15,4" stroke="#444" stroke-width="2"/><circle cx="3" cy="3" r="2.5" fill="#666"/><circle cx="15" cy="4" r="2.5" fill="#555"/><rect x="4.5" y="9.5" width="9" height="8" rx="1" fill="#fff" stroke="#222" stroke-width="2"/></svg>
<svg style="position:absolute;left:897px;top:402px;" width="19" height="18" viewBox="0 0 19 18"><rect x="0" y="1" width="2" height="1.5" fill="#444"/><rect x="3" y="1" width="4" height="1.5" fill="#444"/><rect x="0" y="4.5" width="2" height="1.5" fill="#444"/><rect x="3" y="4.5" width="4" height="1.5" fill="#444"/><rect x="0" y="8" width="2" height="1.5" fill="#444"/><rect x="3" y="8" width="4" height="1.5" fill="#444"/><circle cx="12" cy="4" r="2.5" fill="#555"/><rect x="11" y="6" width="2" height="5" fill="#555"/><rect x="6" y="11" width="12" height="4" fill="#666"/><rect x="6" y="14" width="12" height="2" fill="#222"/></svg>
<div style="left:925px;top:102px;width:246px;height:18px;background:linear-gradient(#8e8e8e,#868686);border-bottom:1px solid #6a6a6a"></div>
<div style="left:925px;top:103px;width:34px;height:17px;background:linear-gradient(#dedede,#d6d6d6);border-right:1px solid #5a5a5a"></div>
<div class="t" style="left:931px;top:106px;font-size:12px;color:#222">图层</div>
<div style="left:959px;top:103px;width:31px;height:17px;border-right:1px solid #6a6a6a;background:linear-gradient(#949494,#8a8a8a)"></div>
<div class="t" style="left:966px;top:106px;font-size:12px;color:#2a2a2a">通道</div>
<div style="left:990px;top:103px;width:31px;height:17px;border-right:1px solid #6a6a6a;background:linear-gradient(#949494,#8a8a8a)"></div>
<div class="t" style="left:997px;top:106px;font-size:12px;color:#2a2a2a">路径</div>
<div style="left:1021px;top:103px;width:31px;height:17px;border-right:1px solid #6a6a6a;background:linear-gradient(#949494,#8a8a8a)"></div>
<div class="t" style="left:1028px;top:106px;font-size:12px;color:#2a2a2a">调整</div>
<div style="left:1052px;top:103px;width:31px;height:17px;border-right:1px solid #6a6a6a;background:linear-gradient(#949494,#8a8a8a)"></div>
<div class="t" style="left:1059px;top:106px;font-size:12px;color:#2a2a2a">字符</div>
<div style="left:1083px;top:103px;width:35px;height:17px;border-right:1px solid #6a6a6a;background:linear-gradient(#949494,#8a8a8a)"></div>
<div class="t" style="left:1090px;top:106px;font-size:12px;color:#2a2a2a">段落</div>
<svg style="position:absolute;left:1153px;top:107px;" width="14" height="9" viewBox="0 0 14 9"><path d="M0,3 L5,3 L2.5,6 Z" fill="#222"/><rect x="6" y="1" width="8" height="1.4" fill="#222"/><rect x="6" y="4" width="8" height="1.4" fill="#222"/><rect x="6" y="7" width="8" height="1.4" fill="#222"/></svg>
<div style="left:929px;top:124px;width:121px;height:21px;background:#fff;border-bottom:1px solid #c8c8c8"></div>
<div class="t" style="left:935px;top:129px;font-size:12px;color:#111">正常</div>
<svg style="position:absolute;left:1040px;top:132px;" width="7" height="4" viewBox="0 0 7 4"><path d="M0,0 L7,0 L3.5,4 Z" fill="#222"/></svg>
<div class="t" style="left:1054px;top:127px;font-size:12px;color:#111">不透明度:</div>
<div style="left:1108px;top:124px;width:41px;height:18px;background:#fff;border:1px solid #bcbcbc;border-right:none"></div>
<div class="t" style="left:1112px;top:126px;font-size:12px;color:#111">100%</div>
<div style="left:1149px;top:124px;width:16px;height:18px;background:linear-gradient(#f2f2f2,#d4d4d4);border:1px solid #aaa"></div>
<svg style="position:absolute;left:1155px;top:130px;" width="4" height="7" viewBox="0 0 4 7"><path d="M0,0 L4,3.5 L0,7 Z" fill="#667"/></svg>
<div style="left:929px;top:147px;width:238px;height:1px;background:#bdbdbd"></div>
<div style="left:929px;top:148px;width:238px;height:1px;background:#ececec"></div>
<div class="t" style="left:932px;top:155px;font-size:12px;color:#111">锁定:</div>
<svg style="position:absolute;left:965px;top:153px;" width="12" height="12" viewBox="0 0 12 12"><rect x="0.5" y="0.5" width="11" height="11" fill="#fff" stroke="#555"/><rect x="1" y="1" width="5" height="5" fill="#ccc"/><rect x="6" y="6" width="5" height="5" fill="#ccc"/></svg>
<svg style="position:absolute;left:983px;top:152px;" width="14" height="14" viewBox="0 0 14 14"><path d="M13,1 L5,9" stroke="#444" stroke-width="1.6"/><path d="M0,14 C1,9 4,8 6,10 C6,13 3,14 0,14 Z" fill="#333"/></svg>
<svg style="position:absolute;left:1001px;top:152px;" width="13" height="13" viewBox="0 0 13 13"><path d="M6.5,1 V12 M1,6.5 H12" stroke="#222" stroke-width="1.4"/><path d="M6.5,0 L4,3 H9 Z M6.5,13 L4,10 H9 Z M0,6.5 L3,4 V9 Z M13,6.5 L10,4 V9 Z" fill="#222"/></svg>
<svg style="position:absolute;left:1020px;top:153px;" width="10" height="12" viewBox="0 0 10 12"><path d="M2.5,5 V3.5 A2.5,2.5 0 0 1 7.5,3.5 V5" fill="none" stroke="#333" stroke-width="1.6"/><rect x="0.5" y="5" width="9" height="7" fill="#444"/></svg>
<div class="t" style="left:1078px;top:155px;font-size:12px;color:#111">填充:</div>
<div style="left:1108px;top:152px;width:41px;height:18px;background:#fff;border:1px solid #bcbcbc;border-right:none"></div>
<div class="t" style="left:1112px;top:154px;font-size:12px;color:#111">100%</div>
<div style="left:1149px;top:152px;width:16px;height:18px;background:linear-gradient(#f2f2f2,#d4d4d4);border:1px solid #aaa"></div>
<svg style="position:absolute;left:1155px;top:158px;" width="4" height="7" viewBox="0 0 4 7"><path d="M0,0 L4,3.5 L0,7 Z" fill="#667"/></svg>
<div style="left:924px;top:173px;width:231px;height:753px;background:#d7d7d7;border-top:1px solid #9a9a9a"></div>
<div style="left:1154px;top:173px;width:14px;height:753px;background:linear-gradient(90deg,#e4e4e4,#f4f4f4)"></div>
<svg style="position:absolute;left:1157px;top:178px;" width="9" height="6" viewBox="0 0 9 6"><path d="M0,5 L4.5,1 L9,5 Z" fill="#999"/></svg>
<svg style="position:absolute;left:1157px;top:912px;" width="9" height="6" viewBox="0 0 9 6"><path d="M0,1 L4.5,5 L9,1 Z" fill="#999"/></svg>
<div style="left:1168px;top:102px;width:3px;height:843px;background:#d7d7d7;border-left:1px solid #c4c4c4"></div>
<div style="left:924px;top:212px;width:231px;height:1px;background:#9a9a9a"></div>
<div style="left:948px;top:174px;width:1px;height:38px;background:#a8a8a8"></div>
<div style="left:929px;top:185px;width:15px;height:15px;border-top:1px solid #b0b0b0;border-left:1px solid #b0b0b0;background:#d0d0d0"></div>
<svg style="position:absolute;left:930px;top:188px;" width="13" height="9" viewBox="0 0 13 9"><path d="M0.5,4.5 C3,0 10,0 12.5,4.5 C10,9 3,9 0.5,4.5 Z" fill="#fff" stroke="#333"/><circle cx="6.5" cy="4.5" r="2.8" fill="#222"/><path d="M1,3 C4,0 9,0 12,3" fill="none" stroke="#222" stroke-width="1.2"/></svg>
<div style="left:948px;top:174px;width:206px;height:38px;background:#3796ff"></div>
<div style="left:966px;top:175px;width:36px;height:36px;background:#0a1a40"></div>
<div style="left:968px;top:177px;width:32px;height:32px;border:1px solid #fff;background:#000"></div>
<svg style="position:absolute;left:970px;top:179px;" width="28" height="28" viewBox="0 0 28 28"><rect width="28" height="28" fill="#fff"/><rect x="4" y="0" width="4" height="4" fill="#cccccc"/><rect x="12" y="0" width="4" height="4" fill="#cccccc"/><rect x="20" y="0" width="4" height="4" fill="#cccccc"/><rect x="28" y="0" width="4" height="4" fill="#cccccc"/><rect x="0" y="4" width="4" height="4" fill="#cccccc"/><rect x="8" y="4" width="4" height="4" fill="#cccccc"/><rect x="16" y="4" width="4" height="4" fill="#cccccc"/><rect x="24" y="4" width="4" height="4" fill="#cccccc"/><rect x="4" y="8" width="4" height="4" fill="#cccccc"/><rect x="12" y="8" width="4" height="4" fill="#cccccc"/><rect x="20" y="8" width="4" height="4" fill="#cccccc"/><rect x="28" y="8" width="4" height="4" fill="#cccccc"/><rect x="0" y="12" width="4" height="4" fill="#cccccc"/><rect x="8" y="12" width="4" height="4" fill="#cccccc"/><rect x="16" y="12" width="4" height="4" fill="#cccccc"/><rect x="24" y="12" width="4" height="4" fill="#cccccc"/><rect x="4" y="16" width="4" height="4" fill="#cccccc"/><rect x="12" y="16" width="4" height="4" fill="#cccccc"/><rect x="20" y="16" width="4" height="4" fill="#cccccc"/><rect x="28" y="16" width="4" height="4" fill="#cccccc"/><rect x="0" y="20" width="4" height="4" fill="#cccccc"/><rect x="8" y="20" width="4" height="4" fill="#cccccc"/><rect x="16" y="20" width="4" height="4" fill="#cccccc"/><rect x="24" y="20" width="4" height="4" fill="#cccccc"/><rect x="4" y="24" width="4" height="4" fill="#cccccc"/><rect x="12" y="24" width="4" height="4" fill="#cccccc"/><rect x="20" y="24" width="4" height="4" fill="#cccccc"/><rect x="28" y="24" width="4" height="4" fill="#cccccc"/><rect x="0" y="28" width="4" height="4" fill="#cccccc"/><rect x="8" y="28" width="4" height="4" fill="#cccccc"/><rect x="16" y="28" width="4" height="4" fill="#cccccc"/><rect x="24" y="28" width="4" height="4" fill="#cccccc"/><rect x="13" y="15" width="2" height="2" fill="#c0103a"/></svg>
<svg style="position:absolute;left:958px;top:188px;" width="8" height="11" viewBox="0 0 8 11"><path d="M7,1 H3 V8" fill="none" stroke="#1a1a3a" stroke-width="1.3"/><path d="M0,7 L3,10.5 L6,7 Z" fill="#1a1a3a"/></svg>
<div class="t" style="left:1007px;top:188px;font-size:12px;color:#fff">红色</div>
<div style="left:924px;top:251px;width:231px;height:1px;background:#9a9a9a"></div>
<div style="left:948px;top:213px;width:1px;height:38px;background:#a8a8a8"></div>
<div style="left:929px;top:224px;width:15px;height:15px;border-top:1px solid #b0b0b0;border-left:1px solid #b0b0b0;background:#d0d0d0"></div>
<svg style="position:absolute;left:930px;top:227px;" width="13" height="9" viewBox="0 0 13 9"><path d="M0.5,4.5 C3,0 10,0 12.5,4.5 C10,9 3,9 0.5,4.5 Z" fill="#fff" stroke="#333"/><circle cx="6.5" cy="4.5" r="2.8" fill="#222"/><path d="M1,3 C4,0 9,0 12,3" fill="none" stroke="#222" stroke-width="1.2"/></svg>
<div style="left:952px;top:216px;width:32px;height:32px;border:1px solid #000;box-shadow:inset 0 0 0 1px rgba(0,0,0,.35);background:#fff"></div>
<svg style="position:absolute;left:954px;top:218px;" width="28" height="28" viewBox="0 0 28 28"><rect width="28" height="28" fill="#fff"/><rect x="4" y="0" width="4" height="4" fill="#cccccc"/><rect x="12" y="0" width="4" height="4" fill="#cccccc"/><rect x="20" y="0" width="4" height="4" fill="#cccccc"/><rect x="28" y="0" width="4" height="4" fill="#cccccc"/><rect x="0" y="4" width="4" height="4" fill="#cccccc"/><rect x="8" y="4" width="4" height="4" fill="#cccccc"/><rect x="16" y="4" width="4" height="4" fill="#cccccc"/><rect x="24" y="4" width="4" height="4" fill="#cccccc"/><rect x="4" y="8" width="4" height="4" fill="#cccccc"/><rect x="12" y="8" width="4" height="4" fill="#cccccc"/><rect x="20" y="8" width="4" height="4" fill="#cccccc"/><rect x="28" y="8" width="4" height="4" fill="#cccccc"/><rect x="0" y="12" width="4" height="4" fill="#cccccc"/><rect x="8" y="12" width="4" height="4" fill="#cccccc"/><rect x="16" y="12" width="4" height="4" fill="#cccccc"/><rect x="24" y="12" width="4" height="4" fill="#cccccc"/><rect x="4" y="16" width="4" height="4" fill="#cccccc"/><rect x="12" y="16" width="4" height="4" fill="#cccccc"/><rect x="20" y="16" width="4" height="4" fill="#cccccc"/><rect x="28" y="16" width="4" height="4" fill="#cccccc"/><rect x="0" y="20" width="4" height="4" fill="#cccccc"/><rect x="8" y="20" width="4" height="4" fill="#cccccc"/><rect x="16" y="20" width="4" height="4" fill="#cccccc"/><rect x="24" y="20" width="4" height="4" fill="#cccccc"/><rect x="4" y="24" width="4" height="4" fill="#cccccc"/><rect x="12" y="24" width="4" height="4" fill="#cccccc"/><rect x="20" y="24" width="4" height="4" fill="#cccccc"/><rect x="28" y="24" width="4" height="4" fill="#cccccc"/><rect x="0" y="28" width="4" height="4" fill="#cccccc"/><rect x="8" y="28" width="4" height="4" fill="#cccccc"/><rect x="16" y="28" width="4" height="4" fill="#cccccc"/><rect x="24" y="28" width="4" height="4" fill="#cccccc"/><rect x="13" y="13" width="2" height="2" fill="#111"/></svg>
<div class="t" style="left:991px;top:227px;font-size:12px;color:#111;text-decoration:underline">黑色</div>
<div style="left:924px;top:290px;width:231px;height:1px;background:#9a9a9a"></div>
<div style="left:948px;top:252px;width:1px;height:38px;background:#a8a8a8"></div>
<div style="left:929px;top:263px;width:15px;height:15px;border-top:1px solid #b0b0b0;border-left:1px solid #b0b0b0;background:#d0d0d0"></div>
<svg style="position:absolute;left:930px;top:266px;" width="13" height="9" viewBox="0 0 13 9"><path d="M0.5,4.5 C3,0 10,0 12.5,4.5 C10,9 3,9 0.5,4.5 Z" fill="#fff" stroke="#333"/><circle cx="6.5" cy="4.5" r="2.8" fill="#222"/><path d="M1,3 C4,0 9,0 12,3" fill="none" stroke="#222" stroke-width="1.2"/></svg>
<div style="left:952px;top:255px;width:32px;height:32px;border:1px solid #000;box-shadow:inset 0 0 0 1px rgba(0,0,0,.35);background:#fff"></div>
<svg style="position:absolute;left:954px;top:257px;" width="28" height="28" viewBox="0 0 28 28"><rect width="28" height="28" fill="#fff"/><rect x="4" y="0" width="4" height="4" fill="#cccccc"/><rect x="12" y="0" width="4" height="4" fill="#cccccc"/><rect x="20" y="0" width="4" height="4" fill="#cccccc"/><rect x="28" y="0" width="4" height="4" fill="#cccccc"/><rect x="0" y="4" width="4" height="4" fill="#cccccc"/><rect x="8" y="4" width="4" height="4" fill="#cccccc"/><rect x="16" y="4" width="4" height="4" fill="#cccccc"/><rect x="24" y="4" width="4" height="4" fill="#cccccc"/><rect x="4" y="8" width="4" height="4" fill="#cccccc"/><rect x="12" y="8" width="4" height="4" fill="#cccccc"/><rect x="20" y="8" width="4" height="4" fill="#cccccc"/><rect x="28" y="8" width="4" height="4" fill="#cccccc"/><rect x="0" y="12" width="4" height="4" fill="#cccccc"/><rect x="8" y="12" width="4" height="4" fill="#cccccc"/><rect x="16" y="12" width="4" height="4" fill="#cccccc"/><rect x="24" y="12" width="4" height="4" fill="#cccccc"/><rect x="4" y="16" width="4" height="4" fill="#cccccc"/><rect x="12" y="16" width="4" height="4" fill="#cccccc"/><rect x="20" y="16" width="4" height="4" fill="#cccccc"/><rect x="28" y="16" width="4" height="4" fill="#cccccc"/><rect x="0" y="20" width="4" height="4" fill="#cccccc"/><rect x="8" y="20" width="4" height="4" fill="#cccccc"/><rect x="16" y="20" width="4" height="4" fill="#cccccc"/><rect x="24" y="20" width="4" height="4" fill="#cccccc"/><rect x="4" y="24" width="4" height="4" fill="#cccccc"/><rect x="12" y="24" width="4" height="4" fill="#cccccc"/><rect x="20" y="24" width="4" height="4" fill="#cccccc"/><rect x="28" y="24" width="4" height="4" fill="#cccccc"/><rect x="0" y="28" width="4" height="4" fill="#cccccc"/><rect x="8" y="28" width="4" height="4" fill="#cccccc"/><rect x="16" y="28" width="4" height="4" fill="#cccccc"/><rect x="24" y="28" width="4" height="4" fill="#cccccc"/></svg>
<div class="t" style="left:991px;top:266px;font-size:12px;color:#111;">图层 2 副本 3</div>
<div style="left:924px;top:329px;width:231px;height:1px;background:#9a9a9a"></div>
<div style="left:948px;top:291px;width:1px;height:38px;background:#a8a8a8"></div>
<div style="left:929px;top:302px;width:15px;height:15px;border-top:1px solid #b0b0b0;border-left:1px solid #b0b0b0;background:#d0d0d0"></div>
<svg style="position:absolute;left:930px;top:305px;" width="13" height="9" viewBox="0 0 13 9"><path d="M0.5,4.5 C3,0 10,0 12.5,4.5 C10,9 3,9 0.5,4.5 Z" fill="#fff" stroke="#333"/><circle cx="6.5" cy="4.5" r="2.8" fill="#222"/><path d="M1,3 C4,0 9,0 12,3" fill="none" stroke="#222" stroke-width="1.2"/></svg>
<div style="left:952px;top:294px;width:32px;height:32px;border:1px solid #000;box-shadow:inset 0 0 0 1px rgba(0,0,0,.35);background:#fff"></div>
<svg style="position:absolute;left:954px;top:296px;" width="28" height="28" viewBox="0 0 28 28"><rect width="28" height="28" fill="#fff"/><rect x="4" y="0" width="4" height="4" fill="#cccccc"/><rect x="12" y="0" width="4" height="4" fill="#cccccc"/><rect x="20" y="0" width="4" height="4" fill="#cccccc"/><rect x="28" y="0" width="4" height="4" fill="#cccccc"/><rect x="0" y="4" width="4" height="4" fill="#cccccc"/><rect x="8" y="4" width="4" height="4" fill="#cccccc"/><rect x="16" y="4" width="4" height="4" fill="#cccccc"/><rect x="24" y="4" width="4" height="4" fill="#cccccc"/><rect x="4" y="8" width="4" height="4" fill="#cccccc"/><rect x="12" y="8" width="4" height="4" fill="#cccccc"/><rect x="20" y="8" width="4" height="4" fill="#cccccc"/><rect x="28" y="8" width="4" height="4" fill="#cccccc"/><rect x="0" y="12" width="4" height="4" fill="#cccccc"/><rect x="8" y="12" width="4" height="4" fill="#cccccc"/><rect x="16" y="12" width="4" height="4" fill="#cccccc"/><rect x="24" y="12" width="4" height="4" fill="#cccccc"/><rect x="4" y="16" width="4" height="4" fill="#cccccc"/><rect x="12" y="16" width="4" height="4" fill="#cccccc"/><rect x="20" y="16" width="4" height="4" fill="#cccccc"/><rect x="28" y="16" width="4" height="4" fill="#cccccc"/><rect x="0" y="20" width="4" height="4" fill="#cccccc"/><rect x="8" y="20" width="4" height="4" fill="#cccccc"/><rect x="16" y="20" width="4" height="4" fill="#cccccc"/><rect x="24" y="20" width="4" height="4" fill="#cccccc"/><rect x="4" y="24" width="4" height="4" fill="#cccccc"/><rect x="12" y="24" width="4" height="4" fill="#cccccc"/><rect x="20" y="24" width="4" height="4" fill="#cccccc"/><rect x="28" y="24" width="4" height="4" fill="#cccccc"/><rect x="0" y="28" width="4" height="4" fill="#cccccc"/><rect x="8" y="28" width="4" height="4" fill="#cccccc"/><rect x="16" y="28" width="4" height="4" fill="#cccccc"/><rect x="24" y="28" width="4" height="4" fill="#cccccc"/></svg>
<div class="t" style="left:991px;top:305px;font-size:12px;color:#111;">图层 2</div>
<div style="left:924px;top:368px;width:231px;height:1px;background:#9a9a9a"></div>
<div style="left:948px;top:330px;width:1px;height:38px;background:#a8a8a8"></div>
<div style="left:929px;top:341px;width:15px;height:15px;border-top:1px solid #b0b0b0;border-left:1px solid #b0b0b0;background:#d0d0d0"></div>
<svg style="position:absolute;left:930px;top:344px;" width="13" height="9" viewBox="0 0 13 9"><path d="M0.5,4.5 C3,0 10,0 12.5,4.5 C10,9 3,9 0.5,4.5 Z" fill="#fff" stroke="#333"/><circle cx="6.5" cy="4.5" r="2.8" fill="#222"/><path d="M1,3 C4,0 9,0 12,3" fill="none" stroke="#222" stroke-width="1.2"/></svg>
<div style="left:952px;top:333px;width:32px;height:32px;border:1px solid #000;box-shadow:inset 0 0 0 1px rgba(0,0,0,.35);background:#fff"></div>
<svg style="position:absolute;left:954px;top:335px;" width="28" height="28" viewBox="0 0 28 28"><rect width="28" height="28" fill="#fff"/><rect x="4" y="0" width="4" height="4" fill="#cccccc"/><rect x="12" y="0" width="4" height="4" fill="#cccccc"/><rect x="20" y="0" width="4" height="4" fill="#cccccc"/><rect x="28" y="0" width="4" height="4" fill="#cccccc"/><rect x="0" y="4" width="4" height="4" fill="#cccccc"/><rect x="8" y="4" width="4" height="4" fill="#cccccc"/><rect x="16" y="4" width="4" height="4" fill="#cccccc"/><rect x="24" y="4" width="4" height="4" fill="#cccccc"/><rect x="4" y="8" width="4" height="4" fill="#cccccc"/><rect x="12" y="8" width="4" height="4" fill="#cccccc"/><rect x="20" y="8" width="4" height="4" fill="#cccccc"/><rect x="28" y="8" width="4" height="4" fill="#cccccc"/><rect x="0" y="12" width="4" height="4" fill="#cccccc"/><rect x="8" y="12" width="4" height="4" fill="#cccccc"/><rect x="16" y="12" width="4" height="4" fill="#cccccc"/><rect x="24" y="12" width="4" height="4" fill="#cccccc"/><rect x="4" y="16" width="4" height="4" fill="#cccccc"/><rect x="12" y="16" width="4" height="4" fill="#cccccc"/><rect x="20" y="16" width="4" height="4" fill="#cccccc"/><rect x="28" y="16" width="4" height="4" fill="#cccccc"/><rect x="0" y="20" width="4" height="4" fill="#cccccc"/><rect x="8" y="20" width="4" height="4" fill="#cccccc"/><rect x="16" y="20" width="4" height="4" fill="#cccccc"/><rect x="24" y="20" width="4" height="4" fill="#cccccc"/><rect x="4" y="24" width="4" height="4" fill="#cccccc"/><rect x="12" y="24" width="4" height="4" fill="#cccccc"/><rect x="20" y="24" width="4" height="4" fill="#cccccc"/><rect x="28" y="24" width="4" height="4" fill="#cccccc"/><rect x="0" y="28" width="4" height="4" fill="#cccccc"/><rect x="8" y="28" width="4" height="4" fill="#cccccc"/><rect x="16" y="28" width="4" height="4" fill="#cccccc"/><rect x="24" y="28" width="4" height="4" fill="#cccccc"/></svg>
<div class="t" style="left:991px;top:344px;font-size:12px;color:#111;">图层 2 副本 2</div>
<div style="left:924px;top:407px;width:231px;height:1px;background:#9a9a9a"></div>
<div style="left:948px;top:369px;width:1px;height:38px;background:#a8a8a8"></div>
<div style="left:929px;top:380px;width:15px;height:15px;border-top:1px solid #b0b0b0;border-left:1px solid #b0b0b0;background:#d0d0d0"></div>
<svg style="position:absolute;left:930px;top:383px;" width="13" height="9" viewBox="0 0 13 9"><path d="M0.5,4.5 C3,0 10,0 12.5,4.5 C10,9 3,9 0.5,4.5 Z" fill="#fff" stroke="#333"/><circle cx="6.5" cy="4.5" r="2.8" fill="#222"/><path d="M1,3 C4,0 9,0 12,3" fill="none" stroke="#222" stroke-width="1.2"/></svg>
<div style="left:952px;top:372px;width:32px;height:32px;border:1px solid #000;box-shadow:inset 0 0 0 1px rgba(0,0,0,.35);background:#fff"></div>
<svg style="position:absolute;left:954px;top:374px;" width="28" height="28" viewBox="0 0 28 28"><rect width="28" height="28" fill="#fff"/><rect x="4" y="0" width="4" height="4" fill="#cccccc"/><rect x="12" y="0" width="4" height="4" fill="#cccccc"/><rect x="20" y="0" width="4" height="4" fill="#cccccc"/><rect x="28" y="0" width="4" height="4" fill="#cccccc"/><rect x="0" y="4" width="4" height="4" fill="#cccccc"/><rect x="8" y="4" width="4" height="4" fill="#cccccc"/><rect x="16" y="4" width="4" height="4" fill="#cccccc"/><rect x="24" y="4" width="4" height="4" fill="#cccccc"/><rect x="4" y="8" width="4" height="4" fill="#cccccc"/><rect x="12" y="8" width="4" height="4" fill="#cccccc"/><rect x="20" y="8" width="4" height="4" fill="#cccccc"/><rect x="28" y="8" width="4" height="4" fill="#cccccc"/><rect x="0" y="12" width="4" height="4" fill="#cccccc"/><rect x="8" y="12" width="4" height="4" fill="#cccccc"/><rect x="16" y="12" width="4" height="4" fill="#cccccc"/><rect x="24" y="12" width="4" height="4" fill="#cccccc"/><rect x="4" y="16" width="4" height="4" fill="#cccccc"/><rect x="12" y="16" width="4" height="4" fill="#cccccc"/><rect x="20" y="16" width="4" height="4" fill="#cccccc"/><rect x="28" y="16" width="4" height="4" fill="#cccccc"/><rect x="0" y="20" width="4" height="4" fill="#cccccc"/><rect x="8" y="20" width="4" height="4" fill="#cccccc"/><rect x="16" y="20" width="4" height="4" fill="#cccccc"/><rect x="24" y="20" width="4" height="4" fill="#cccccc"/><rect x="4" y="24" width="4" height="4" fill="#cccccc"/><rect x="12" y="24" width="4" height="4" fill="#cccccc"/><rect x="20" y="24" width="4" height="4" fill="#cccccc"/><rect x="28" y="24" width="4" height="4" fill="#cccccc"/><rect x="0" y="28" width="4" height="4" fill="#cccccc"/><rect x="8" y="28" width="4" height="4" fill="#cccccc"/><rect x="16" y="28" width="4" height="4" fill="#cccccc"/><rect x="24" y="28" width="4" height="4" fill="#cccccc"/></svg>
<div class="t" style="left:991px;top:383px;font-size:12px;color:#111;">图层 2 副本</div>
<div style="left:924px;top:446px;width:231px;height:1px;background:#9a9a9a"></div>
<div style="left:948px;top:408px;width:1px;height:38px;background:#a8a8a8"></div>
<div style="left:929px;top:419px;width:15px;height:15px;border-top:1px solid #b0b0b0;border-left:1px solid #b0b0b0;background:#d0d0d0"></div>
<svg style="position:absolute;left:930px;top:422px;" width="13" height="9" viewBox="0 0 13 9"><path d="M0.5,4.5 C3,0 10,0 12.5,4.5 C10,9 3,9 0.5,4.5 Z" fill="#fff" stroke="#333"/><circle cx="6.5" cy="4.5" r="2.8" fill="#222"/><path d="M1,3 C4,0 9,0 12,3" fill="none" stroke="#222" stroke-width="1.2"/></svg>
<div style="left:952px;top:411px;width:32px;height:32px;border:1px solid #000;box-shadow:inset 0 0 0 1px rgba(0,0,0,.35);background:#fff"></div>
<svg style="position:absolute;left:954px;top:413px;" width="28" height="28" viewBox="0 0 28 28"><rect width="28" height="28" fill="#fff"/><rect x="4" y="0" width="4" height="4" fill="#cccccc"/><rect x="12" y="0" width="4" height="4" fill="#cccccc"/><rect x="20" y="0" width="4" height="4" fill="#cccccc"/><rect x="28" y="0" width="4" height="4" fill="#cccccc"/><rect x="0" y="4" width="4" height="4" fill="#cccccc"/><rect x="8" y="4" width="4" height="4" fill="#cccccc"/><rect x="16" y="4" width="4" height="4" fill="#cccccc"/><rect x="24" y="4" width="4" height="4" fill="#cccccc"/><rect x="4" y="8" width="4" height="4" fill="#cccccc"/><rect x="12" y="8" width="4" height="4" fill="#cccccc"/><rect x="20" y="8" width="4" height="4" fill="#cccccc"/><rect x="28" y="8" width="4" height="4" fill="#cccccc"/><rect x="0" y="12" width="4" height="4" fill="#cccccc"/><rect x="8" y="12" width="4" height="4" fill="#cccccc"/><rect x="16" y="12" width="4" height="4" fill="#cccccc"/><rect x="24" y="12" width="4" height="4" fill="#cccccc"/><rect x="4" y="16" width="4" height="4" fill="#cccccc"/><rect x="12" y="16" width="4" height="4" fill="#cccccc"/><rect x="20" y="16" width="4" height="4" fill="#cccccc"/><rect x="28" y="16" width="4" height="4" fill="#cccccc"/><rect x="0" y="20" width="4" height="4" fill="#cccccc"/><rect x="8" y="20" width="4" height="4" fill="#cccccc"/><rect x="16" y="20" width="4" height="4" fill="#cccccc"/><rect x="24" y="20" width="4" height="4" fill="#cccccc"/><rect x="4" y="24" width="4" height="4" fill="#cccccc"/><rect x="12" y="24" width="4" height="4" fill="#cccccc"/><rect x="20" y="24" width="4" height="4" fill="#cccccc"/><rect x="28" y="24" width="4" height="4" fill="#cccccc"/><rect x="0" y="28" width="4" height="4" fill="#cccccc"/><rect x="8" y="28" width="4" height="4" fill="#cccccc"/><rect x="16" y="28" width="4" height="4" fill="#cccccc"/><rect x="24" y="28" width="4" height="4" fill="#cccccc"/><circle cx="14" cy="14" r="6" fill="#fcc400"/></svg>
<div class="t" style="left:991px;top:422px;font-size:12px;color:#111;">图层 1</div>
<div style="left:924px;top:485px;width:231px;height:1px;background:#9a9a9a"></div>
<div style="left:948px;top:447px;width:1px;height:38px;background:#a8a8a8"></div>
<div style="left:929px;top:458px;width:15px;height:15px;border-top:1px solid #b0b0b0;border-left:1px solid #b0b0b0;background:#d0d0d0"></div>
<svg style="position:absolute;left:930px;top:461px;" width="13" height="9" viewBox="0 0 13 9"><path d="M0.5,4.5 C3,0 10,0 12.5,4.5 C10,9 3,9 0.5,4.5 Z" fill="#fff" stroke="#333"/><circle cx="6.5" cy="4.5" r="2.8" fill="#222"/><path d="M1,3 C4,0 9,0 12,3" fill="none" stroke="#222" stroke-width="1.2"/></svg>
<div style="left:952px;top:451px;width:32px;height:32px;border:1px solid #000;box-shadow:inset 0 0 0 1px rgba(0,0,0,.35);background:#ea5a24"></div>
<div style="left:954px;top:473px;width:28px;height:8px;background:#fff"></div>
<svg style="position:absolute;left:955px;top:475px;" width="26" height="6" viewBox="0 0 26 6"><rect x="2" y="0" width="22" height="1" fill="#222"/><path d="M10,5 L13,2 L16,5 Z" fill="#222"/></svg>
<svg style="position:absolute;left:986px;top:460px;" width="8" height="14" viewBox="0 0 8 14"><rect x="1" y="0.5" width="6" height="13" rx="3" fill="#eee" stroke="#777"/><rect x="3.5" y="3" width="1" height="8" fill="#555"/></svg>
<div style="left:999px;top:451px;width:32px;height:32px;border:1px solid #000;box-shadow:inset 0 0 0 1px rgba(0,0,0,.35);background:#808080"></div>
<svg style="position:absolute;left:1001px;top:453px;" width="28" height="28" viewBox="0 0 28 28"><circle cx="14" cy="14" r="7.5" fill="#111" stroke="#111" stroke-width="1.2" stroke-dasharray="1.5,1"/><circle cx="17" cy="10" r="0.8" fill="#fff"/></svg>
<div class="t" style="left:1038px;top:461px;font-size:12px;color:#111">形状 1</div>
<div style="left:924px;top:524px;width:231px;height:1px;background:#9a9a9a"></div>
<div style="left:948px;top:486px;width:1px;height:38px;background:#a8a8a8"></div>
<div style="left:929px;top:497px;width:15px;height:15px;border-top:1px solid #b0b0b0;border-left:1px solid #b0b0b0;background:#d0d0d0"></div>
<svg style="position:absolute;left:930px;top:500px;" width="13" height="9" viewBox="0 0 13 9"><path d="M0.5,4.5 C3,0 10,0 12.5,4.5 C10,9 3,9 0.5,4.5 Z" fill="#fff" stroke="#333"/><circle cx="6.5" cy="4.5" r="2.8" fill="#222"/><path d="M1,3 C4,0 9,0 12,3" fill="none" stroke="#222" stroke-width="1.2"/></svg>
<div style="left:952px;top:490px;width:32px;height:32px;border:1px solid #000;box-shadow:inset 0 0 0 1px rgba(0,0,0,.35);background:#fff"></div>
<div class="t" style="left:993px;top:500px;font-size:12px;color:#111;font-style:italic">背景</div>
<svg style="position:absolute;left:1128px;top:500px;" width="10" height="11" viewBox="0 0 10 11"><path d="M2.5,5 V3.5 A2.5,2.5 0 0 1 7.5,3.5 V5" fill="none" stroke="#555" stroke-width="1.2"/><rect x="0.5" y="5" width="9" height="6" fill="#eee" stroke="#555"/><rect x="4" y="7" width="2" height="2" fill="#555"/></svg>
<div style="left:924px;top:926px;width:247px;height:18px;background:#d7d7d7;border-top:1px solid #9a9a9a"></div>
<svg style="position:absolute;left:969px;top:929px;" width="19" height="10" viewBox="0 0 19 10"><path d="M3.5,1.5 H7.5 A3,3 0 0 1 7.5,7.5 H3.5 A3,3 0 0 1 3.5,1.5 Z M10.5,1.5 H14.5 A3,3 0 0 1 14.5,7.5 H10.5 A3,3 0 0 1 10.5,1.5 Z" fill="none" stroke="#8a8a8a" stroke-width="1.5"/><path d="M5,4.5 H13" stroke="#8a8a8a" stroke-width="1.3"/></svg>
<svg style="position:absolute;left:999px;top:928px;" width="18" height="13" viewBox="0 0 18 13"><text x="0" y="10" font-family="Liberation Serif" font-style="italic" font-weight="bold" font-size="12.5" fill="#333">fx</text><path d="M13,10.5 H16 L14.5,12.5 Z" fill="#111"/></svg>
<svg style="position:absolute;left:1026px;top:928px;" width="14" height="12" viewBox="0 0 14 12"><rect x="0.5" y="0.5" width="13" height="11" fill="#8a8a8a" stroke="#333"/><circle cx="7" cy="6" r="3.6" fill="#fff" stroke="#333" stroke-width="0.8"/></svg>
<svg style="position:absolute;left:1054px;top:928px;" width="17" height="13" viewBox="0 0 17 13"><circle cx="6.5" cy="6" r="5.5" fill="#f4f4f4" stroke="#333"/><path d="M2.6,9.9 A5.5,5.5 0 0 1 10.4,2.1 Z" fill="#333"/><path d="M13,10.5 H16 L14.5,12.5 Z" fill="#111"/></svg>
<svg style="position:absolute;left:1081px;top:929px;" width="12" height="10" viewBox="0 0 12 10"><path d="M0.5,1.5 H4 L5,0.5 H11.5 V9.5 H0.5 Z" fill="#f0f0f0" stroke="#333"/><path d="M1,9 H11.5" stroke="#555" stroke-width="1.4"/></svg>
<svg style="position:absolute;left:1109px;top:929px;" width="11" height="11" viewBox="0 0 11 11"><rect x="0.5" y="0.5" width="9.5" height="9.5" fill="#f0f0f0" stroke="#333"/><rect x="4.5" y="4.5" width="4" height="4" fill="#333"/><path d="M1,10.5 H10.5 V1" fill="none" stroke="#777"/></svg>
<svg style="position:absolute;left:1136px;top:927px;" width="10" height="13" viewBox="0 0 10 13"><path d="M0.5,3 H9.5 M3,1.5 H7" stroke="#333" stroke-width="1.2"/><rect x="1.5" y="4.5" width="7" height="8" fill="#eee" stroke="#333"/><path d="M3.5,6 V11 M5,6 V11 M6.5,6 V11" stroke="#555" stroke-width="0.8"/></svg>
<div style="left:4px;top:944px;width:1167px;height:1px;background:#3a3a3a"></div>
<div style="left:305px;top:60px;width:1px;height:27px;background:#8c8c8c"></div>
<div style="left:306px;top:60px;width:1px;height:27px;background:#f0f0f0"></div>
<div style="left:451px;top:60px;width:1px;height:27px;background:#8c8c8c"></div>
<div style="left:452px;top:60px;width:1px;height:27px;background:#f0f0f0"></div>
<div style="left:597px;top:60px;width:1px;height:27px;background:#8c8c8c"></div>
<div style="left:598px;top:60px;width:1px;height:27px;background:#f0f0f0"></div>
<svg style="position:absolute;left:317px;top:67px;" width="17" height="15" viewBox="0 0 17 15"><rect x="0" y="0" width="15" height="1" fill="#444"/><rect x="1.5" y="2.5" width="5" height="8" fill="#cfcfcf" stroke="#555" stroke-width="1"/><rect x="8.5" y="2.5" width="4" height="4" fill="#cfcfcf" stroke="#555" stroke-width="1"/></svg>
<svg style="position:absolute;left:336px;top:67px;" width="17" height="15" viewBox="0 0 17 15"><rect x="0" y="6" width="16" height="1" fill="#444"/><rect x="3.5" y="2.5" width="5" height="8" fill="#cfcfcf" stroke="#555" stroke-width="1"/><rect x="10.5" y="4.5" width="4" height="4" fill="#cfcfcf" stroke="#555" stroke-width="1"/></svg>
<svg style="position:absolute;left:358px;top:67px;" width="17" height="15" viewBox="0 0 17 15"><rect x="0" y="11" width="15" height="1" fill="#444"/><rect x="1.5" y="1.5" width="5" height="8" fill="#cfcfcf" stroke="#555" stroke-width="1"/><rect x="8.5" y="5.5" width="4" height="4" fill="#cfcfcf" stroke="#555" stroke-width="1"/></svg>
<svg style="position:absolute;left:388px;top:66px;" width="17" height="15" viewBox="0 0 17 15"><rect x="0" y="0" width="1" height="13" fill="#444"/><rect x="2.5" y="1.5" width="4" height="4" fill="#cfcfcf" stroke="#555" stroke-width="1"/><rect x="2.5" y="7.5" width="8" height="5" fill="#cfcfcf" stroke="#555" stroke-width="1"/></svg>
<svg style="position:absolute;left:409px;top:66px;" width="17" height="15" viewBox="0 0 17 15"><rect x="4" y="0" width="1" height="14" fill="#444"/><rect x="2.5" y="1.5" width="4" height="4" fill="#cfcfcf" stroke="#555" stroke-width="1"/><rect x="0.5" y="7.5" width="9" height="5" fill="#cfcfcf" stroke="#555" stroke-width="1"/></svg>
<svg style="position:absolute;left:428px;top:66px;" width="17" height="15" viewBox="0 0 17 15"><rect x="11" y="0" width="1" height="13" fill="#444"/><rect x="5.5" y="1.5" width="4" height="4" fill="#cfcfcf" stroke="#555" stroke-width="1"/><rect x="1.5" y="7.5" width="8" height="5" fill="#cfcfcf" stroke="#555" stroke-width="1"/></svg>
<svg style="position:absolute;left:464px;top:66px;" width="17" height="15" viewBox="0 0 17 15"><rect x="0" y="1" width="15" height="1" fill="#444"/><rect x="4.5" y="2.5" width="6" height="3" fill="#cfcfcf" stroke="#555" stroke-width="1"/><rect x="0" y="7" width="15" height="1" fill="#444"/><rect x="3.5" y="8.5" width="8" height="4" fill="#cfcfcf" stroke="#555" stroke-width="1"/></svg>
<svg style="position:absolute;left:484px;top:66px;" width="17" height="15" viewBox="0 0 17 15"><rect x="0" y="4" width="14" height="1" fill="#444"/><rect x="4.5" y="2.5" width="6" height="4" fill="#cfcfcf" stroke="#555" stroke-width="1"/><rect x="0" y="9" width="14" height="1" fill="#444"/><rect x="3.5" y="7.5" width="8" height="5" fill="#cfcfcf" stroke="#555" stroke-width="1"/></svg>
<svg style="position:absolute;left:505px;top:66px;" width="17" height="15" viewBox="0 0 17 15"><rect x="0" y="6" width="15" height="1" fill="#444"/><rect x="4.5" y="2.5" width="6" height="3" fill="#cfcfcf" stroke="#555" stroke-width="1"/><rect x="0" y="12" width="15" height="1" fill="#444"/><rect x="3.5" y="8.5" width="8" height="3" fill="#cfcfcf" stroke="#555" stroke-width="1"/></svg>
<svg style="position:absolute;left:532px;top:65px;" width="17" height="15" viewBox="0 0 17 15"><rect x="1" y="0" width="1" height="14" fill="#444"/><rect x="2.5" y="3.5" width="5" height="9" fill="#cfcfcf" stroke="#555" stroke-width="1"/><rect x="8" y="0" width="1" height="14" fill="#444"/><rect x="9.5" y="4.5" width="4" height="6" fill="#cfcfcf" stroke="#555" stroke-width="1"/></svg>
<svg style="position:absolute;left:553px;top:65px;" width="17" height="15" viewBox="0 0 17 15"><rect x="4" y="0" width="1" height="14" fill="#444"/><rect x="1.5" y="3.5" width="5" height="9" fill="#cfcfcf" stroke="#555" stroke-width="1"/><rect x="10" y="0" width="1" height="14" fill="#444"/><rect x="8.5" y="4.5" width="5" height="6" fill="#cfcfcf" stroke="#555" stroke-width="1"/></svg>
<svg style="position:absolute;left:573px;top:65px;" width="17" height="15" viewBox="0 0 17 15"><rect x="5" y="0" width="1" height="14" fill="#444"/><rect x="1.5" y="3.5" width="5" height="9" fill="#cfcfcf" stroke="#555" stroke-width="1"/><rect x="12" y="0" width="1" height="14" fill="#444"/><rect x="7.5" y="4.5" width="4" height="6" fill="#cfcfcf" stroke="#555" stroke-width="1"/></svg>
<svg style="position:absolute;left:607px;top:64px;" width="18" height="17" viewBox="0 0 18 17"><ellipse cx="6" cy="8" rx="5" ry="6.5" fill="#ddd" stroke="#666"/><ellipse cx="12" cy="8" rx="5" ry="6.5" fill="#bbb" stroke="#666"/><path d="M4,6 H7 M10,6 H14 M9,1 V15" stroke="#555"/></svg>
<svg style="position:absolute;left:453px;top:112px;" width="1" height="13" viewBox="0 0 1 13"><rect x="0" y="0" width="1" height="1" fill="#444"/><rect x="0" y="2" width="1" height="1" fill="#444"/><rect x="0" y="4" width="1" height="1" fill="#444"/><rect x="0" y="6" width="1" height="1" fill="#444"/><rect x="0" y="8" width="1" height="1" fill="#444"/><rect x="0" y="10" width="1" height="1" fill="#444"/><rect x="0" y="12" width="1" height="1" fill="#444"/></svg>
<svg style="position:absolute;left:43px;top:210px;" width="12" height="1" viewBox="0 0 12 1"><rect x="0" y="0" width="1" height="1" fill="#444"/><rect x="2" y="0" width="1" height="1" fill="#444"/><rect x="4" y="0" width="1" height="1" fill="#444"/><rect x="6" y="0" width="1" height="1" fill="#444"/><rect x="8" y="0" width="1" height="1" fill="#444"/><rect x="10" y="0" width="1" height="1" fill="#444"/></svg>
</body></html>
